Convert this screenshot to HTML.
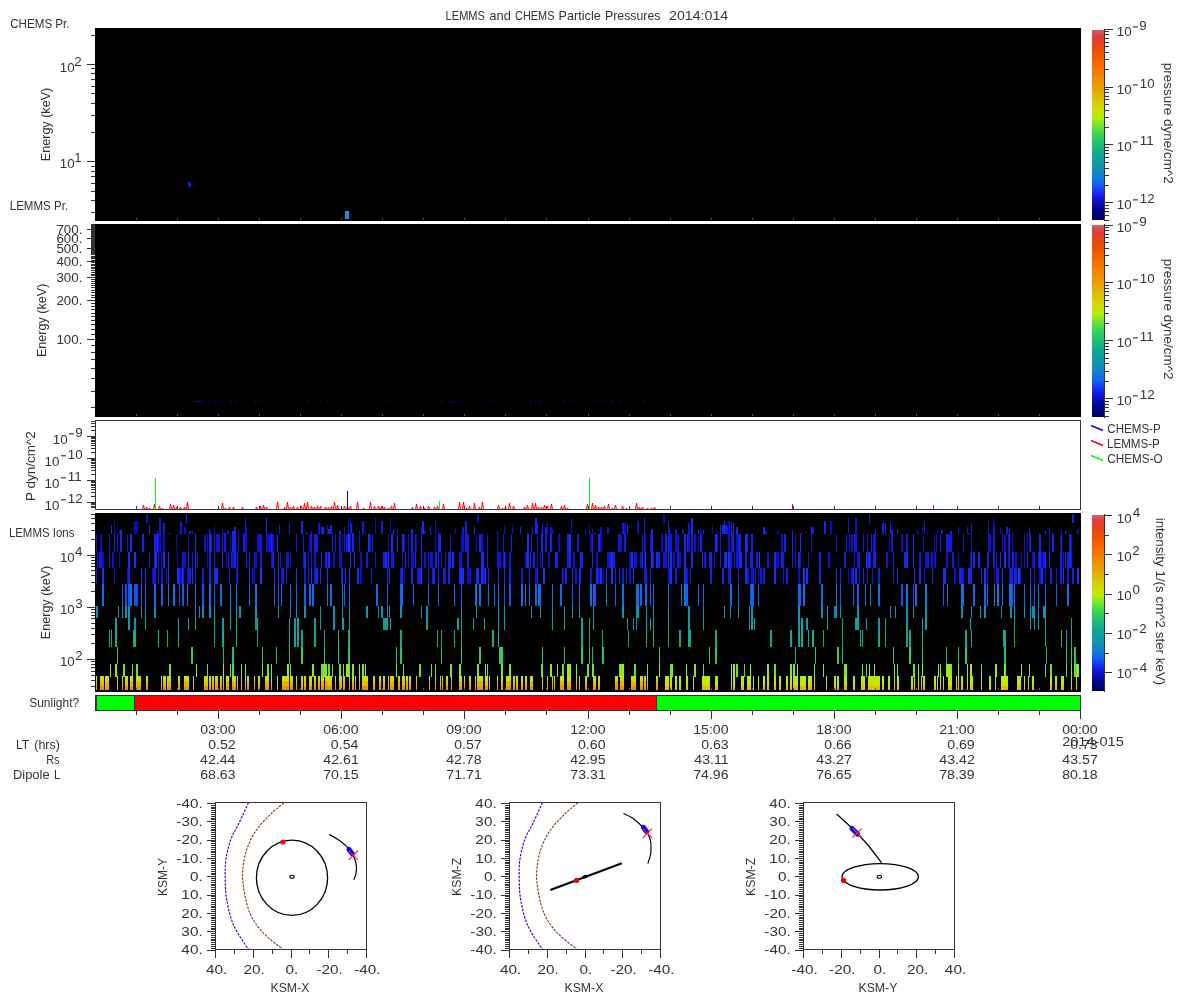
<!DOCTYPE html><html><head><meta charset="utf-8"><style>html,body{margin:0;padding:0;background:#fff;overflow:hidden}svg{display:block;will-change:transform}text{font-family:"Liberation Sans",sans-serif}</style></head><body>
<svg width="1200" height="1000" viewBox="0 0 1200 1000">
<rect x="0" y="0" width="1200" height="1000" fill="#fff"/>
<text x="445.62" y="19.75" font-size="12.7" textLength="39.30" lengthAdjust="spacingAndGlyphs" fill="#333" style="white-space:pre">LEMMS</text>
<text x="489.23" y="19.75" font-size="12.7" textLength="21.66" lengthAdjust="spacingAndGlyphs" fill="#333" style="white-space:pre">and</text>
<text x="515.05" y="19.75" font-size="12.7" textLength="39.40" lengthAdjust="spacingAndGlyphs" fill="#333" style="white-space:pre">CHEMS</text>
<text x="558.59" y="19.75" font-size="12.7" textLength="42.18" lengthAdjust="spacingAndGlyphs" fill="#333" style="white-space:pre">Particle</text>
<text x="605.02" y="19.75" font-size="12.7" textLength="55.37" lengthAdjust="spacingAndGlyphs" fill="#333" style="white-space:pre">Pressures</text>
<text x="669.04" y="19.75" font-size="12.7" textLength="59.15" lengthAdjust="spacingAndGlyphs" fill="#333" style="white-space:pre">2014:014</text>
<rect x="95" y="28" width="986" height="193" fill="#000"/>
<text x="10.22" y="27.8" font-size="12.7" textLength="59.35" lengthAdjust="spacingAndGlyphs" fill="#333" style="white-space:pre">CHEMS Pr.</text>
<rect x="91" y="35" width="4" height="1" fill="#333"/>
<rect x="87" y="64" width="8" height="1" fill="#333"/>
<rect x="91" y="68" width="4" height="1" fill="#333"/>
<rect x="91" y="73" width="4" height="1" fill="#333"/>
<rect x="91" y="79" width="4" height="1" fill="#333"/>
<rect x="91" y="86" width="4" height="1" fill="#333"/>
<rect x="91" y="93" width="4" height="1" fill="#333"/>
<rect x="91" y="103" width="4" height="1" fill="#333"/>
<rect x="91" y="115" width="4" height="1" fill="#333"/>
<rect x="91" y="132" width="4" height="1" fill="#333"/>
<rect x="87" y="161" width="8" height="1" fill="#333"/>
<rect x="91" y="166" width="4" height="1" fill="#333"/>
<rect x="91" y="171" width="4" height="1" fill="#333"/>
<rect x="91" y="176" width="4" height="1" fill="#333"/>
<rect x="91" y="183" width="4" height="1" fill="#333"/>
<rect x="91" y="191" width="4" height="1" fill="#333"/>
<rect x="91" y="200" width="4" height="1" fill="#333"/>
<rect x="91" y="212" width="4" height="1" fill="#333"/>
<text x="59.83" y="71.8" font-size="12.7" textLength="14.83" lengthAdjust="spacingAndGlyphs" fill="#333" style="white-space:pre">10</text>
<text x="74.20" y="65.8" font-size="12.7" textLength="7.42" lengthAdjust="spacingAndGlyphs" fill="#333" style="white-space:pre">2</text>
<text x="59.83" y="168.3" font-size="12.7" textLength="14.83" lengthAdjust="spacingAndGlyphs" fill="#333" style="white-space:pre">10</text>
<text x="74.20" y="162.3" font-size="12.7" textLength="7.42" lengthAdjust="spacingAndGlyphs" fill="#333" style="white-space:pre">1</text>
<text transform="translate(49.9,160.20) rotate(-90)" x="-1.01" y="0" font-size="12.7" textLength="73.43" lengthAdjust="spacingAndGlyphs" fill="#333" style="white-space:pre">Energy (keV)</text>
<rect x="188" y="182" width="3" height="5" fill="#1020c0"/>
<rect x="345" y="211" width="4" height="8" fill="#1890e8"/>
<rect x="136" y="218" width="1" height="2" fill="#555"/>
<rect x="177" y="218" width="1" height="2" fill="#555"/>
<rect x="218" y="218" width="1" height="2" fill="#555"/>
<rect x="259" y="218" width="1" height="2" fill="#555"/>
<rect x="300" y="218" width="1" height="2" fill="#555"/>
<rect x="341" y="218" width="1" height="2" fill="#555"/>
<rect x="382" y="218" width="1" height="2" fill="#555"/>
<rect x="423" y="218" width="1" height="2" fill="#555"/>
<rect x="464" y="218" width="1" height="2" fill="#555"/>
<rect x="505" y="218" width="1" height="2" fill="#555"/>
<rect x="546" y="218" width="1" height="2" fill="#555"/>
<rect x="588" y="218" width="1" height="2" fill="#555"/>
<rect x="629" y="218" width="1" height="2" fill="#555"/>
<rect x="670" y="218" width="1" height="2" fill="#555"/>
<rect x="711" y="218" width="1" height="2" fill="#555"/>
<rect x="752" y="218" width="1" height="2" fill="#555"/>
<rect x="793" y="218" width="1" height="2" fill="#555"/>
<rect x="834" y="218" width="1" height="2" fill="#555"/>
<rect x="875" y="218" width="1" height="2" fill="#555"/>
<rect x="916" y="218" width="1" height="2" fill="#555"/>
<rect x="957" y="218" width="1" height="2" fill="#555"/>
<rect x="998" y="218" width="1" height="2" fill="#555"/>
<rect x="1039" y="218" width="1" height="2" fill="#555"/>
<defs><linearGradient id="cb30" x1="0" y1="0" x2="0" y2="1"><stop offset="0.000" stop-color="#d0606a"/><stop offset="0.040" stop-color="#e03a3a"/><stop offset="0.114" stop-color="#f05000"/><stop offset="0.200" stop-color="#f87000"/><stop offset="0.256" stop-color="#f08c00"/><stop offset="0.324" stop-color="#e8a800"/><stop offset="0.370" stop-color="#d8c800"/><stop offset="0.426" stop-color="#d0e000"/><stop offset="0.466" stop-color="#b0f000"/><stop offset="0.483" stop-color="#90e820"/><stop offset="0.540" stop-color="#40d850"/><stop offset="0.597" stop-color="#20c070"/><stop offset="0.653" stop-color="#10a890"/><stop offset="0.710" stop-color="#1098a8"/><stop offset="0.767" stop-color="#1080d0"/><stop offset="0.807" stop-color="#1068f0"/><stop offset="0.852" stop-color="#1830f8"/><stop offset="0.892" stop-color="#1010d0"/><stop offset="0.938" stop-color="#000890"/><stop offset="1.000" stop-color="#000060"/></linearGradient></defs>
<rect x="1092" y="30" width="12" height="190" fill="url(#cb30)"/>
<rect x="1104" y="29" width="1" height="192" fill="#333"/>
<rect x="1104" y="29" width="9" height="1" fill="#333"/>
<rect x="1104" y="87" width="9" height="1" fill="#333"/>
<rect x="1104" y="69" width="5" height="1" fill="#333"/>
<rect x="1104" y="59" width="5" height="1" fill="#333"/>
<rect x="1104" y="52" width="5" height="1" fill="#333"/>
<rect x="1104" y="46" width="5" height="1" fill="#333"/>
<rect x="1104" y="42" width="5" height="1" fill="#333"/>
<rect x="1104" y="38" width="5" height="1" fill="#333"/>
<rect x="1104" y="34" width="5" height="1" fill="#333"/>
<rect x="1104" y="31" width="5" height="1" fill="#333"/>
<rect x="1104" y="144" width="9" height="1" fill="#333"/>
<rect x="1104" y="127" width="5" height="1" fill="#333"/>
<rect x="1104" y="117" width="5" height="1" fill="#333"/>
<rect x="1104" y="110" width="5" height="1" fill="#333"/>
<rect x="1104" y="104" width="5" height="1" fill="#333"/>
<rect x="1104" y="99" width="5" height="1" fill="#333"/>
<rect x="1104" y="96" width="5" height="1" fill="#333"/>
<rect x="1104" y="92" width="5" height="1" fill="#333"/>
<rect x="1104" y="89" width="5" height="1" fill="#333"/>
<rect x="1104" y="202" width="9" height="1" fill="#333"/>
<rect x="1104" y="185" width="5" height="1" fill="#333"/>
<rect x="1104" y="175" width="5" height="1" fill="#333"/>
<rect x="1104" y="168" width="5" height="1" fill="#333"/>
<rect x="1104" y="162" width="5" height="1" fill="#333"/>
<rect x="1104" y="157" width="5" height="1" fill="#333"/>
<rect x="1104" y="153" width="5" height="1" fill="#333"/>
<rect x="1104" y="150" width="5" height="1" fill="#333"/>
<rect x="1104" y="147" width="5" height="1" fill="#333"/>
<rect x="1104" y="220" width="5" height="1" fill="#333"/>
<rect x="1104" y="215" width="5" height="1" fill="#333"/>
<rect x="1104" y="211" width="5" height="1" fill="#333"/>
<rect x="1104" y="208" width="5" height="1" fill="#333"/>
<rect x="1104" y="205" width="5" height="1" fill="#333"/>
<text x="1116.83" y="36.4" font-size="12.7" textLength="14.83" lengthAdjust="spacingAndGlyphs" fill="#333" style="white-space:pre">10</text>
<rect x="1133.00" y="26.30" width="4.8" height="1.15" fill="#333"/>
<text x="1139.33" y="30.3" font-size="12.7" textLength="7.42" lengthAdjust="spacingAndGlyphs" fill="#333" style="white-space:pre">9</text>
<text x="1116.83" y="94.4" font-size="12.7" textLength="14.83" lengthAdjust="spacingAndGlyphs" fill="#333" style="white-space:pre">10</text>
<rect x="1133.00" y="84.30" width="4.8" height="1.15" fill="#333"/>
<text x="1139.83" y="88.3" font-size="12.7" textLength="14.83" lengthAdjust="spacingAndGlyphs" fill="#333" style="white-space:pre">10</text>
<text x="1116.83" y="151.4" font-size="12.7" textLength="14.83" lengthAdjust="spacingAndGlyphs" fill="#333" style="white-space:pre">10</text>
<rect x="1133.00" y="141.30" width="4.8" height="1.15" fill="#333"/>
<text x="1139.83" y="145.3" font-size="12.7" textLength="13.84" lengthAdjust="spacingAndGlyphs" fill="#333" style="white-space:pre">11</text>
<text x="1116.83" y="209.4" font-size="12.7" textLength="14.83" lengthAdjust="spacingAndGlyphs" fill="#333" style="white-space:pre">10</text>
<rect x="1133.00" y="199.30" width="4.8" height="1.15" fill="#333"/>
<text x="1139.83" y="203.3" font-size="12.7" textLength="14.83" lengthAdjust="spacingAndGlyphs" fill="#333" style="white-space:pre">12</text>
<text transform="translate(1164,63.80) rotate(90)" x="-0.94" y="0" font-size="12.7" textLength="120.86" lengthAdjust="spacingAndGlyphs" fill="#333" style="white-space:pre">pressure dyne/cm^2</text>
<rect x="95" y="224" width="986" height="193" fill="#000"/>
<text x="9.78" y="210" font-size="12.7" textLength="58.32" lengthAdjust="spacingAndGlyphs" fill="#333" style="white-space:pre">LEMMS Pr.</text>
<rect x="91" y="407" width="4" height="1" fill="#333"/>
<rect x="91" y="391" width="4" height="1" fill="#333"/>
<rect x="91" y="378" width="4" height="1" fill="#333"/>
<rect x="91" y="368" width="4" height="1" fill="#333"/>
<rect x="91" y="359" width="4" height="1" fill="#333"/>
<rect x="91" y="352" width="4" height="1" fill="#333"/>
<rect x="91" y="345" width="4" height="1" fill="#333"/>
<rect x="87" y="339" width="8" height="1" fill="#333"/>
<rect x="91" y="334" width="4" height="1" fill="#333"/>
<rect x="91" y="329" width="4" height="1" fill="#333"/>
<rect x="91" y="324" width="4" height="1" fill="#333"/>
<rect x="91" y="320" width="4" height="1" fill="#333"/>
<rect x="91" y="316" width="4" height="1" fill="#333"/>
<rect x="91" y="313" width="4" height="1" fill="#333"/>
<rect x="91" y="309" width="4" height="1" fill="#333"/>
<rect x="91" y="306" width="4" height="1" fill="#333"/>
<rect x="91" y="303" width="4" height="1" fill="#333"/>
<rect x="87" y="300" width="8" height="1" fill="#333"/>
<rect x="91" y="297" width="4" height="1" fill="#333"/>
<rect x="91" y="295" width="4" height="1" fill="#333"/>
<rect x="91" y="292" width="4" height="1" fill="#333"/>
<rect x="91" y="290" width="4" height="1" fill="#333"/>
<rect x="91" y="287" width="4" height="1" fill="#333"/>
<rect x="91" y="285" width="4" height="1" fill="#333"/>
<rect x="91" y="283" width="4" height="1" fill="#333"/>
<rect x="91" y="281" width="4" height="1" fill="#333"/>
<rect x="91" y="279" width="4" height="1" fill="#333"/>
<rect x="87" y="277" width="8" height="1" fill="#333"/>
<rect x="91" y="275" width="4" height="1" fill="#333"/>
<rect x="91" y="274" width="4" height="1" fill="#333"/>
<rect x="91" y="272" width="4" height="1" fill="#333"/>
<rect x="91" y="270" width="4" height="1" fill="#333"/>
<rect x="91" y="268" width="4" height="1" fill="#333"/>
<rect x="91" y="267" width="4" height="1" fill="#333"/>
<rect x="91" y="265" width="4" height="1" fill="#333"/>
<rect x="91" y="264" width="4" height="1" fill="#333"/>
<rect x="91" y="262" width="4" height="1" fill="#333"/>
<rect x="87" y="261" width="8" height="1" fill="#333"/>
<rect x="91" y="260" width="4" height="1" fill="#333"/>
<rect x="91" y="258" width="4" height="1" fill="#333"/>
<rect x="91" y="257" width="4" height="1" fill="#333"/>
<rect x="91" y="256" width="4" height="1" fill="#333"/>
<rect x="91" y="254" width="4" height="1" fill="#333"/>
<rect x="91" y="253" width="4" height="1" fill="#333"/>
<rect x="91" y="252" width="4" height="1" fill="#333"/>
<rect x="91" y="251" width="4" height="1" fill="#333"/>
<rect x="91" y="250" width="4" height="1" fill="#333"/>
<rect x="87" y="248" width="8" height="1" fill="#333"/>
<rect x="91" y="247" width="4" height="1" fill="#333"/>
<rect x="91" y="246" width="4" height="1" fill="#333"/>
<rect x="91" y="245" width="4" height="1" fill="#333"/>
<rect x="91" y="244" width="4" height="1" fill="#333"/>
<rect x="91" y="243" width="4" height="1" fill="#333"/>
<rect x="91" y="242" width="4" height="1" fill="#333"/>
<rect x="91" y="241" width="4" height="1" fill="#333"/>
<rect x="91" y="240" width="4" height="1" fill="#333"/>
<rect x="91" y="239" width="4" height="1" fill="#333"/>
<rect x="87" y="238" width="8" height="1" fill="#333"/>
<rect x="91" y="237" width="4" height="1" fill="#333"/>
<rect x="91" y="236" width="4" height="1" fill="#333"/>
<rect x="91" y="235" width="4" height="1" fill="#333"/>
<rect x="91" y="235" width="4" height="1" fill="#333"/>
<rect x="91" y="234" width="4" height="1" fill="#333"/>
<rect x="91" y="233" width="4" height="1" fill="#333"/>
<rect x="91" y="232" width="4" height="1" fill="#333"/>
<rect x="91" y="231" width="4" height="1" fill="#333"/>
<rect x="91" y="230" width="4" height="1" fill="#333"/>
<rect x="87" y="229" width="8" height="1" fill="#333"/>
<rect x="91" y="229" width="4" height="1" fill="#333"/>
<rect x="91" y="228" width="4" height="1" fill="#333"/>
<rect x="91" y="227" width="4" height="1" fill="#333"/>
<rect x="91" y="226" width="4" height="1" fill="#333"/>
<rect x="91" y="226" width="4" height="1" fill="#333"/>
<rect x="91" y="225" width="4" height="1" fill="#333"/>
<rect x="91" y="224" width="4" height="1" fill="#333"/>
<rect x="91" y="225" width="4" height="26" fill="#333"/>
<text x="56.43" y="233.5" font-size="12.7" textLength="25.95" lengthAdjust="spacingAndGlyphs" fill="#333" style="white-space:pre">700.</text>
<text x="56.43" y="242.5" font-size="12.7" textLength="25.95" lengthAdjust="spacingAndGlyphs" fill="#333" style="white-space:pre">600.</text>
<text x="56.43" y="252.5" font-size="12.7" textLength="25.95" lengthAdjust="spacingAndGlyphs" fill="#333" style="white-space:pre">500.</text>
<text x="56.43" y="265.5" font-size="12.7" textLength="25.95" lengthAdjust="spacingAndGlyphs" fill="#333" style="white-space:pre">400.</text>
<text x="56.43" y="281.5" font-size="12.7" textLength="25.95" lengthAdjust="spacingAndGlyphs" fill="#333" style="white-space:pre">300.</text>
<text x="56.43" y="304.5" font-size="12.7" textLength="25.95" lengthAdjust="spacingAndGlyphs" fill="#333" style="white-space:pre">200.</text>
<text x="56.43" y="343.5" font-size="12.7" textLength="25.95" lengthAdjust="spacingAndGlyphs" fill="#333" style="white-space:pre">100.</text>
<text transform="translate(46.2,356.10) rotate(-90)" x="-1.01" y="0" font-size="12.7" textLength="73.43" lengthAdjust="spacingAndGlyphs" fill="#333" style="white-space:pre">Energy (keV)</text>
<rect x="136" y="414" width="1" height="2" fill="#555"/>
<rect x="177" y="414" width="1" height="2" fill="#555"/>
<rect x="218" y="414" width="1" height="2" fill="#555"/>
<rect x="259" y="414" width="1" height="2" fill="#555"/>
<rect x="300" y="414" width="1" height="2" fill="#555"/>
<rect x="341" y="414" width="1" height="2" fill="#555"/>
<rect x="382" y="414" width="1" height="2" fill="#555"/>
<rect x="423" y="414" width="1" height="2" fill="#555"/>
<rect x="464" y="414" width="1" height="2" fill="#555"/>
<rect x="505" y="414" width="1" height="2" fill="#555"/>
<rect x="546" y="414" width="1" height="2" fill="#555"/>
<rect x="588" y="414" width="1" height="2" fill="#555"/>
<rect x="629" y="414" width="1" height="2" fill="#555"/>
<rect x="670" y="414" width="1" height="2" fill="#555"/>
<rect x="711" y="414" width="1" height="2" fill="#555"/>
<rect x="752" y="414" width="1" height="2" fill="#555"/>
<rect x="793" y="414" width="1" height="2" fill="#555"/>
<rect x="834" y="414" width="1" height="2" fill="#555"/>
<rect x="875" y="414" width="1" height="2" fill="#555"/>
<rect x="916" y="414" width="1" height="2" fill="#555"/>
<rect x="957" y="414" width="1" height="2" fill="#555"/>
<rect x="998" y="414" width="1" height="2" fill="#555"/>
<rect x="1039" y="414" width="1" height="2" fill="#555"/>
<rect x="466" y="401" width="1" height="1" fill="#0010a0"/>
<rect x="539" y="401" width="2" height="1" fill="#0010a0"/>
<rect x="184" y="401" width="1" height="1" fill="#0010a0"/>
<rect x="231" y="401" width="1" height="1" fill="#0010a0"/>
<rect x="194" y="401" width="2" height="1" fill="#0010a0"/>
<rect x="354" y="401" width="1" height="1" fill="#0010a0"/>
<rect x="223" y="401" width="1" height="1" fill="#0010a0"/>
<rect x="563" y="401" width="1" height="1" fill="#0010a0"/>
<rect x="381" y="401" width="1" height="1" fill="#0010a0"/>
<rect x="569" y="401" width="1" height="1" fill="#0010a0"/>
<rect x="261" y="401" width="1" height="1" fill="#0010a0"/>
<rect x="198" y="401" width="2" height="1" fill="#0010a0"/>
<rect x="541" y="401" width="1" height="1" fill="#0010a0"/>
<rect x="361" y="401" width="1" height="1" fill="#0010a0"/>
<rect x="271" y="401" width="1" height="1" fill="#0010a0"/>
<rect x="564" y="401" width="1" height="1" fill="#0010a0"/>
<rect x="255" y="401" width="2" height="1" fill="#0010a0"/>
<rect x="450" y="401" width="2" height="1" fill="#0010a0"/>
<rect x="320" y="401" width="1" height="1" fill="#0010a0"/>
<rect x="327" y="401" width="1" height="1" fill="#0010a0"/>
<rect x="234" y="401" width="2" height="1" fill="#0010a0"/>
<rect x="199" y="401" width="2" height="1" fill="#0010a0"/>
<rect x="196" y="401" width="2" height="1" fill="#0010a0"/>
<rect x="345" y="401" width="1" height="1" fill="#0010a0"/>
<rect x="572" y="401" width="1" height="1" fill="#0010a0"/>
<rect x="611" y="401" width="2" height="1" fill="#0010a0"/>
<rect x="599" y="401" width="1" height="1" fill="#0010a0"/>
<rect x="441" y="401" width="1" height="1" fill="#0010a0"/>
<rect x="319" y="401" width="2" height="1" fill="#0010a0"/>
<rect x="384" y="401" width="1" height="1" fill="#0010a0"/>
<rect x="442" y="401" width="2" height="1" fill="#0010a0"/>
<rect x="641" y="401" width="1" height="1" fill="#0010a0"/>
<rect x="594" y="401" width="1" height="1" fill="#0010a0"/>
<rect x="209" y="401" width="1" height="1" fill="#0010a0"/>
<rect x="563" y="401" width="1" height="1" fill="#0010a0"/>
<rect x="485" y="401" width="1" height="1" fill="#0010a0"/>
<rect x="635" y="401" width="1" height="1" fill="#0010a0"/>
<rect x="175" y="401" width="2" height="1" fill="#0010a0"/>
<rect x="214" y="401" width="2" height="1" fill="#0010a0"/>
<rect x="456" y="401" width="1" height="1" fill="#0010a0"/>
<rect x="493" y="401" width="2" height="1" fill="#0010a0"/>
<rect x="643" y="401" width="2" height="1" fill="#0010a0"/>
<rect x="602" y="401" width="1" height="1" fill="#0010a0"/>
<rect x="230" y="401" width="1" height="1" fill="#0010a0"/>
<rect x="620" y="401" width="2" height="1" fill="#0010a0"/>
<rect x="201" y="401" width="1" height="1" fill="#0010a0"/>
<rect x="452" y="401" width="2" height="1" fill="#0010a0"/>
<rect x="591" y="401" width="1" height="1" fill="#0010a0"/>
<rect x="530" y="401" width="2" height="1" fill="#0010a0"/>
<rect x="490" y="401" width="1" height="1" fill="#0010a0"/>
<rect x="607" y="401" width="1" height="1" fill="#0010a0"/>
<rect x="307" y="401" width="2" height="1" fill="#0010a0"/>
<rect x="254" y="401" width="1" height="1" fill="#0010a0"/>
<rect x="195" y="401" width="1" height="1" fill="#0010a0"/>
<rect x="429" y="401" width="1" height="1" fill="#0010a0"/>
<rect x="388" y="401" width="1" height="1" fill="#0010a0"/>
<rect x="535" y="401" width="1" height="1" fill="#0010a0"/>
<rect x="217" y="401" width="1" height="1" fill="#0010a0"/>
<rect x="594" y="401" width="1" height="1" fill="#0010a0"/>
<rect x="419" y="401" width="1" height="1" fill="#0010a0"/>
<defs><linearGradient id="cb225" x1="0" y1="0" x2="0" y2="1"><stop offset="0.000" stop-color="#d0606a"/><stop offset="0.040" stop-color="#e03a3a"/><stop offset="0.114" stop-color="#f05000"/><stop offset="0.200" stop-color="#f87000"/><stop offset="0.256" stop-color="#f08c00"/><stop offset="0.324" stop-color="#e8a800"/><stop offset="0.370" stop-color="#d8c800"/><stop offset="0.426" stop-color="#d0e000"/><stop offset="0.466" stop-color="#b0f000"/><stop offset="0.483" stop-color="#90e820"/><stop offset="0.540" stop-color="#40d850"/><stop offset="0.597" stop-color="#20c070"/><stop offset="0.653" stop-color="#10a890"/><stop offset="0.710" stop-color="#1098a8"/><stop offset="0.767" stop-color="#1080d0"/><stop offset="0.807" stop-color="#1068f0"/><stop offset="0.852" stop-color="#1830f8"/><stop offset="0.892" stop-color="#1010d0"/><stop offset="0.938" stop-color="#000890"/><stop offset="1.000" stop-color="#000060"/></linearGradient></defs>
<rect x="1092" y="225" width="12" height="192" fill="url(#cb225)"/>
<rect x="1104" y="224" width="1" height="194" fill="#333"/>
<rect x="1104" y="225" width="9" height="1" fill="#333"/>
<rect x="1104" y="282" width="9" height="1" fill="#333"/>
<rect x="1104" y="265" width="5" height="1" fill="#333"/>
<rect x="1104" y="255" width="5" height="1" fill="#333"/>
<rect x="1104" y="248" width="5" height="1" fill="#333"/>
<rect x="1104" y="242" width="5" height="1" fill="#333"/>
<rect x="1104" y="237" width="5" height="1" fill="#333"/>
<rect x="1104" y="234" width="5" height="1" fill="#333"/>
<rect x="1104" y="230" width="5" height="1" fill="#333"/>
<rect x="1104" y="227" width="5" height="1" fill="#333"/>
<rect x="1104" y="340" width="9" height="1" fill="#333"/>
<rect x="1104" y="323" width="5" height="1" fill="#333"/>
<rect x="1104" y="313" width="5" height="1" fill="#333"/>
<rect x="1104" y="306" width="5" height="1" fill="#333"/>
<rect x="1104" y="300" width="5" height="1" fill="#333"/>
<rect x="1104" y="295" width="5" height="1" fill="#333"/>
<rect x="1104" y="291" width="5" height="1" fill="#333"/>
<rect x="1104" y="288" width="5" height="1" fill="#333"/>
<rect x="1104" y="285" width="5" height="1" fill="#333"/>
<rect x="1104" y="398" width="9" height="1" fill="#333"/>
<rect x="1104" y="381" width="5" height="1" fill="#333"/>
<rect x="1104" y="371" width="5" height="1" fill="#333"/>
<rect x="1104" y="363" width="5" height="1" fill="#333"/>
<rect x="1104" y="358" width="5" height="1" fill="#333"/>
<rect x="1104" y="353" width="5" height="1" fill="#333"/>
<rect x="1104" y="349" width="5" height="1" fill="#333"/>
<rect x="1104" y="346" width="5" height="1" fill="#333"/>
<rect x="1104" y="343" width="5" height="1" fill="#333"/>
<rect x="1104" y="416" width="5" height="1" fill="#333"/>
<rect x="1104" y="411" width="5" height="1" fill="#333"/>
<rect x="1104" y="407" width="5" height="1" fill="#333"/>
<rect x="1104" y="404" width="5" height="1" fill="#333"/>
<rect x="1104" y="401" width="5" height="1" fill="#333"/>
<text x="1116.83" y="232.4" font-size="12.7" textLength="14.83" lengthAdjust="spacingAndGlyphs" fill="#333" style="white-space:pre">10</text>
<rect x="1133.00" y="222.30" width="4.8" height="1.15" fill="#333"/>
<text x="1139.33" y="226.3" font-size="12.7" textLength="7.42" lengthAdjust="spacingAndGlyphs" fill="#333" style="white-space:pre">9</text>
<text x="1116.83" y="289.4" font-size="12.7" textLength="14.83" lengthAdjust="spacingAndGlyphs" fill="#333" style="white-space:pre">10</text>
<rect x="1133.00" y="279.30" width="4.8" height="1.15" fill="#333"/>
<text x="1139.83" y="283.3" font-size="12.7" textLength="14.83" lengthAdjust="spacingAndGlyphs" fill="#333" style="white-space:pre">10</text>
<text x="1116.83" y="347.4" font-size="12.7" textLength="14.83" lengthAdjust="spacingAndGlyphs" fill="#333" style="white-space:pre">10</text>
<rect x="1133.00" y="337.30" width="4.8" height="1.15" fill="#333"/>
<text x="1139.83" y="341.3" font-size="12.7" textLength="13.84" lengthAdjust="spacingAndGlyphs" fill="#333" style="white-space:pre">11</text>
<text x="1116.83" y="405.4" font-size="12.7" textLength="14.83" lengthAdjust="spacingAndGlyphs" fill="#333" style="white-space:pre">10</text>
<rect x="1133.00" y="395.30" width="4.8" height="1.15" fill="#333"/>
<text x="1139.83" y="399.3" font-size="12.7" textLength="14.83" lengthAdjust="spacingAndGlyphs" fill="#333" style="white-space:pre">12</text>
<text transform="translate(1164,259.60) rotate(90)" x="-0.94" y="0" font-size="12.7" textLength="120.86" lengthAdjust="spacingAndGlyphs" fill="#333" style="white-space:pre">pressure dyne/cm^2</text>
<rect x="95.5" y="420.5" width="985" height="89" fill="#fff" stroke="#333" stroke-width="1"/>
<rect x="87" y="436" width="8" height="1" fill="#333"/>
<rect x="91" y="430" width="4" height="1" fill="#333"/>
<rect x="91" y="426" width="4" height="1" fill="#333"/>
<rect x="91" y="423" width="4" height="1" fill="#333"/>
<rect x="91" y="421" width="4" height="1" fill="#333"/>
<rect x="87" y="458" width="8" height="1" fill="#333"/>
<rect x="91" y="452" width="4" height="1" fill="#333"/>
<rect x="91" y="448" width="4" height="1" fill="#333"/>
<rect x="91" y="445" width="4" height="1" fill="#333"/>
<rect x="91" y="443" width="4" height="1" fill="#333"/>
<rect x="91" y="441" width="4" height="1" fill="#333"/>
<rect x="91" y="440" width="4" height="1" fill="#333"/>
<rect x="91" y="438" width="4" height="1" fill="#333"/>
<rect x="91" y="437" width="4" height="1" fill="#333"/>
<rect x="87" y="480" width="8" height="1" fill="#333"/>
<rect x="91" y="474" width="4" height="1" fill="#333"/>
<rect x="91" y="470" width="4" height="1" fill="#333"/>
<rect x="91" y="467" width="4" height="1" fill="#333"/>
<rect x="91" y="465" width="4" height="1" fill="#333"/>
<rect x="91" y="463" width="4" height="1" fill="#333"/>
<rect x="91" y="462" width="4" height="1" fill="#333"/>
<rect x="91" y="460" width="4" height="1" fill="#333"/>
<rect x="91" y="459" width="4" height="1" fill="#333"/>
<rect x="87" y="502" width="8" height="1" fill="#333"/>
<rect x="91" y="496" width="4" height="1" fill="#333"/>
<rect x="91" y="492" width="4" height="1" fill="#333"/>
<rect x="91" y="489" width="4" height="1" fill="#333"/>
<rect x="91" y="487" width="4" height="1" fill="#333"/>
<rect x="91" y="485" width="4" height="1" fill="#333"/>
<rect x="91" y="484" width="4" height="1" fill="#333"/>
<rect x="91" y="482" width="4" height="1" fill="#333"/>
<rect x="91" y="481" width="4" height="1" fill="#333"/>
<rect x="91" y="507" width="4" height="1" fill="#333"/>
<rect x="91" y="506" width="4" height="1" fill="#333"/>
<rect x="91" y="504" width="4" height="1" fill="#333"/>
<rect x="91" y="503" width="4" height="1" fill="#333"/>
<rect x="91" y="436" width="4" height="3" fill="#333"/>
<rect x="91" y="458" width="4" height="3" fill="#333"/>
<rect x="91" y="480" width="4" height="3" fill="#333"/>
<rect x="91" y="502" width="4" height="3" fill="#333"/>
<rect x="136" y="506" width="1" height="3" fill="#333"/>
<rect x="177" y="506" width="1" height="3" fill="#333"/>
<rect x="218" y="506" width="1" height="3" fill="#333"/>
<rect x="259" y="506" width="1" height="3" fill="#333"/>
<rect x="300" y="506" width="1" height="3" fill="#333"/>
<rect x="341" y="506" width="1" height="3" fill="#333"/>
<rect x="382" y="506" width="1" height="3" fill="#333"/>
<rect x="423" y="506" width="1" height="3" fill="#333"/>
<rect x="464" y="506" width="1" height="3" fill="#333"/>
<rect x="505" y="506" width="1" height="3" fill="#333"/>
<rect x="546" y="506" width="1" height="3" fill="#333"/>
<rect x="588" y="506" width="1" height="3" fill="#333"/>
<rect x="629" y="506" width="1" height="3" fill="#333"/>
<rect x="670" y="506" width="1" height="3" fill="#333"/>
<rect x="711" y="506" width="1" height="3" fill="#333"/>
<rect x="752" y="506" width="1" height="3" fill="#333"/>
<rect x="793" y="506" width="1" height="3" fill="#333"/>
<rect x="834" y="506" width="1" height="3" fill="#333"/>
<rect x="875" y="506" width="1" height="3" fill="#333"/>
<rect x="916" y="506" width="1" height="3" fill="#333"/>
<rect x="957" y="506" width="1" height="3" fill="#333"/>
<rect x="998" y="506" width="1" height="3" fill="#333"/>
<rect x="1039" y="506" width="1" height="3" fill="#333"/>
<rect x="69.00" y="433.20" width="4.8" height="1.15" fill="#333"/>
<text x="75.33" y="437.2" font-size="12.7" textLength="7.42" lengthAdjust="spacingAndGlyphs" fill="#333" style="white-space:pre">9</text>
<text x="52.73" y="443.7" font-size="12.7" textLength="14.83" lengthAdjust="spacingAndGlyphs" fill="#333" style="white-space:pre">10</text>
<rect x="61.00" y="455.20" width="4.8" height="1.15" fill="#333"/>
<text x="67.83" y="459.2" font-size="12.7" textLength="14.83" lengthAdjust="spacingAndGlyphs" fill="#333" style="white-space:pre">10</text>
<text x="44.53" y="465.7" font-size="12.7" textLength="14.83" lengthAdjust="spacingAndGlyphs" fill="#333" style="white-space:pre">10</text>
<rect x="61.00" y="477.20" width="4.8" height="1.15" fill="#333"/>
<text x="67.83" y="481.2" font-size="12.7" textLength="13.84" lengthAdjust="spacingAndGlyphs" fill="#333" style="white-space:pre">11</text>
<text x="44.53" y="487.7" font-size="12.7" textLength="14.83" lengthAdjust="spacingAndGlyphs" fill="#333" style="white-space:pre">10</text>
<rect x="61.00" y="499.20" width="4.8" height="1.15" fill="#333"/>
<text x="67.83" y="503.2" font-size="12.7" textLength="14.83" lengthAdjust="spacingAndGlyphs" fill="#333" style="white-space:pre">12</text>
<text x="44.53" y="509.7" font-size="12.7" textLength="14.83" lengthAdjust="spacingAndGlyphs" fill="#333" style="white-space:pre">10</text>
<text transform="translate(34.8,500.00) rotate(-90)" x="-1.08" y="0" font-size="12.7" textLength="69.89" lengthAdjust="spacingAndGlyphs" fill="#333" style="white-space:pre">P dyn/cm^2</text>
<path d="M142.5 509.5L143.5 505L144.5 509.5 M145.5 509.5L146.5 507L147.5 509.5 M148.5 509.5L149.5 508L150.5 509.5 M153.5 509.5L154.5 504L155.5 509.5 M158.5 509.5L159.5 506L160.5 509.5 M161.5 509.5L162.5 508L163.5 509.5 M169.5 509.5L170.5 504L171.5 509.5 M172.5 509.5L173.5 505L174.5 509.5 M175.5 509.5L176.5 507L177.5 509.5 M179.5 509.5L180.5 507L181.5 509.5 M183.5 509.5L184.5 507L185.5 509.5 M186.5 509.5L187.5 502L188.5 509.5 M221.5 509.5L222.5 503L223.5 509.5 M224.5 509.5L225.5 508L226.5 509.5 M228.5 509.5L229.5 507L230.5 509.5 M232.5 509.5L233.5 507L234.5 509.5 M241.5 509.5L242.5 507L243.5 509.5 M255.5 509.5L256.5 507L257.5 509.5 M259.5 509.5L260.5 506L261.5 509.5 M262.5 509.5L263.5 505L264.5 509.5 M265.5 509.5L266.5 507L267.5 509.5 M276.5 509.5L277.5 502L278.5 509.5 M283.5 509.5L284.5 507L285.5 509.5 M286.5 509.5L287.5 502L288.5 509.5 M289.5 509.5L290.5 507L291.5 509.5 M292.5 509.5L293.5 506L294.5 509.5 M296.5 509.5L297.5 507L298.5 509.5 M300.5 509.5L301.5 506L302.5 509.5 M303.5 509.5L304.5 503L305.5 509.5 M306.5 509.5L307.5 502L308.5 509.5 M310.5 509.5L311.5 506L312.5 509.5 M313.5 509.5L314.5 507L315.5 509.5 M316.5 509.5L317.5 506L318.5 509.5 M319.5 509.5L320.5 506L321.5 509.5 M324.5 509.5L325.5 507L326.5 509.5 M327.5 509.5L328.5 507L329.5 509.5 M330.5 509.5L331.5 506L332.5 509.5 M333.5 509.5L334.5 502L335.5 509.5 M336.5 509.5L337.5 505L338.5 509.5 M343.5 509.5L344.5 506L345.5 509.5 M346.5 509.5L347.5 506L348.5 509.5 M349.5 509.5L350.5 506L351.5 509.5 M356.5 509.5L357.5 502L358.5 509.5 M362.5 509.5L363.5 508L364.5 509.5 M369.5 509.5L370.5 502L371.5 509.5 M373.5 509.5L374.5 506L375.5 509.5 M377.5 509.5L378.5 506L379.5 509.5 M380.5 509.5L381.5 506L382.5 509.5 M383.5 509.5L384.5 507L385.5 509.5 M387.5 509.5L388.5 508L389.5 509.5 M390.5 509.5L391.5 506L392.5 509.5 M393.5 509.5L394.5 503L395.5 509.5 M411.5 509.5L412.5 507L413.5 509.5 M415.5 509.5L416.5 504L417.5 509.5 M419.5 509.5L420.5 506L421.5 509.5 M423.5 509.5L424.5 508L425.5 509.5 M427.5 509.5L428.5 506L429.5 509.5 M433.5 509.5L434.5 507L435.5 509.5 M436.5 509.5L437.5 506L438.5 509.5 M442.5 509.5L443.5 504L444.5 509.5 M458.5 509.5L459.5 502L460.5 509.5 M462.5 509.5L463.5 502L464.5 509.5 M465.5 509.5L466.5 508L467.5 509.5 M468.5 509.5L469.5 506L470.5 509.5 M473.5 509.5L474.5 503L475.5 509.5 M478.5 509.5L479.5 507L480.5 509.5 M481.5 509.5L482.5 502L483.5 509.5 M497.5 509.5L498.5 505L499.5 509.5 M501.5 509.5L502.5 508L503.5 509.5 M504.5 509.5L505.5 507L506.5 509.5 M508.5 509.5L509.5 503L510.5 509.5 M512.5 509.5L513.5 506L514.5 509.5 M523.5 509.5L524.5 507L525.5 509.5 M526.5 509.5L527.5 505L528.5 509.5 M531.5 509.5L532.5 503L533.5 509.5 M534.5 509.5L535.5 503L536.5 509.5 M537.5 509.5L538.5 507L539.5 509.5 M540.5 509.5L541.5 507L542.5 509.5 M543.5 509.5L544.5 505L545.5 509.5 M546.5 509.5L547.5 506L548.5 509.5 M550.5 509.5L551.5 504L552.5 509.5 M560.5 509.5L561.5 506L562.5 509.5 M563.5 509.5L564.5 505L565.5 509.5 M566.5 509.5L567.5 508L568.5 509.5 M586.5 509.5L587.5 504L588.5 509.5 M591.5 509.5L592.5 503L593.5 509.5 M594.5 509.5L595.5 505L596.5 509.5 M597.5 509.5L598.5 507L599.5 509.5 M600.5 509.5L601.5 507L602.5 509.5 M603.5 509.5L604.5 506L605.5 509.5 M607.5 509.5L608.5 504L609.5 509.5 M611.5 509.5L612.5 508L613.5 509.5 M614.5 509.5L615.5 505L616.5 509.5 M621.5 509.5L622.5 506L623.5 509.5 M625.5 509.5L626.5 508L627.5 509.5 M635.5 509.5L636.5 503L637.5 509.5 M638.5 509.5L639.5 507L640.5 509.5 M641.5 509.5L642.5 507L643.5 509.5 M646.5 509.5L647.5 508L648.5 509.5 M650.5 509.5L651.5 508L652.5 509.5 M653.5 509.5L654.5 507L655.5 509.5" stroke="#ff0000" stroke-width="1" fill="none"/>
<rect x="792" y="504" width="1" height="5" fill="#ff0000"/>
<rect x="933" y="505" width="1" height="4" fill="#ff0000"/>
<rect x="155" y="478" width="1" height="31" fill="#00ff00"/>
<rect x="589" y="478" width="1" height="31" fill="#00ff00"/>
<rect x="439" y="501" width="1" height="8" fill="#00ff00"/>
<rect x="347" y="491" width="1" height="18" fill="#0000ff"/>
<line x1="1091" y1="425.5" x2="1103" y2="430.5" stroke="#0000ff" stroke-width="1.5"/>
<text x="1107.32" y="432.9" font-size="12.7" textLength="53.37" lengthAdjust="spacingAndGlyphs" fill="#333" style="white-space:pre">CHEMS-P</text>
<line x1="1091" y1="440.5" x2="1103" y2="445.5" stroke="#ff0000" stroke-width="1.5"/>
<text x="1106.97" y="447.9" font-size="12.7" textLength="52.88" lengthAdjust="spacingAndGlyphs" fill="#333" style="white-space:pre">LEMMS-P</text>
<line x1="1091" y1="455.5" x2="1103" y2="460.5" stroke="#00ff00" stroke-width="1.5"/>
<text x="1107.31" y="462.6" font-size="12.7" textLength="55.40" lengthAdjust="spacingAndGlyphs" fill="#333" style="white-space:pre">CHEMS-O</text>
<rect x="95" y="513" width="986" height="179" fill="#000"/>
<path fill="#0a0db7" d="M134 521h2v13h-2zM136 521h2v13h-2zM176 534h1v18h-1zM246 534h1v18h-1zM342 534h1v18h-1zM431 533h1v1h-1zM435 534h1v18h-1zM477 514h2v9h-2zM661 534h2v18h-2zM663 514h2v9h-2zM698 534h1v18h-1zM717 534h1v18h-1zM923 534h1v18h-1zM934 534h1v18h-1zM1002 531h1v3h-1zM1027 534h1v18h-1zM1077 529h2v5h-2z"/>
<path fill="#0b0ebe" d="M100 534h2v18h-2zM102 552h2v16h-2zM109 534h1v18h-1zM114 521h1v13h-1zM159 534h2v18h-2zM177 552h1v16h-1zM188 534h1v18h-1zM207 552h1v16h-1zM227 529h1v5h-1zM257 534h1v18h-1zM267 534h2v18h-2zM290 552h1v16h-1zM327 525h1v9h-1zM332 533h1v1h-1zM360 552h2v16h-2zM375 518h1v16h-1zM390 518h1v16h-1zM416 534h1v18h-1zM435 521h1v13h-1zM459 552h2v16h-2zM461 534h1v18h-1zM476 534h1v18h-1zM497 534h1v18h-1zM537 534h1v18h-1zM548 552h2v16h-2zM558 534h2v18h-2zM600 534h2v18h-2zM624 523h2v11h-2zM636 552h1v16h-1zM645 534h1v18h-1zM712 525h1v9h-1zM728 521h2v13h-2zM738 552h1v16h-1zM776 552h1v16h-1zM777 531h2v3h-2zM777 552h2v16h-2zM805 531h1v3h-1zM830 521h2v13h-2zM875 534h1v18h-1zM901 534h2v18h-2zM927 531h1v3h-1zM971 534h1v18h-1zM1024 533h1v1h-1zM1041 552h2v16h-2z"/>
<path fill="#0d0fc5" d="M114 568h1v16h-1zM119 552h1v16h-1zM127 568h1v16h-1zM163 534h2v18h-2zM204 534h2v18h-2zM209 529h2v5h-2zM214 525h1v9h-1zM230 534h1v18h-1zM236 568h1v16h-1zM243 533h1v1h-1zM252 568h2v16h-2zM254 568h1v16h-1zM255 552h2v16h-2zM271 552h1v16h-1zM303 552h1v16h-1zM309 534h2v18h-2zM321 527h1v7h-1zM327 552h1v16h-1zM333 552h2v16h-2zM339 552h2v16h-2zM344 527h1v7h-1zM348 518h1v16h-1zM388 534h1v18h-1zM397 529h1v5h-1zM402 552h1v16h-1zM404 534h1v18h-1zM408 534h1v18h-1zM413 533h1v1h-1zM438 531h1v3h-1zM498 552h1v16h-1zM512 525h1v9h-1zM525 552h1v16h-1zM541 529h1v5h-1zM585 530h1v4h-1zM596 552h2v16h-2zM603 568h1v16h-1zM620 534h2v18h-2zM629 552h2v16h-2zM637 521h2v13h-2zM644 552h1v16h-1zM653 552h1v16h-1zM673 552h2v16h-2zM675 529h2v5h-2zM677 534h2v18h-2zM679 552h2v16h-2zM700 530h2v4h-2zM714 552h1v16h-1zM728 534h2v18h-2zM730 552h1v16h-1zM751 568h2v16h-2zM795 534h1v18h-1zM848 568h1v16h-1zM889 534h1v18h-1zM934 552h1v16h-1zM1004 534h2v18h-2zM1009 568h1v16h-1zM1021 552h1v16h-1zM1024 534h1v18h-1zM1029 534h1v18h-1zM1032 552h2v16h-2zM1061 530h1v4h-1z"/>
<path fill="#0f0fcc" d="M96 534h1v18h-1zM146 514h2v9h-2zM152 568h2v16h-2zM161 568h1v16h-1zM166 568h1v16h-1zM180 568h2v16h-2zM184 552h2v16h-2zM188 568h1v16h-1zM207 534h1v18h-1zM216 534h2v18h-2zM226 552h1v16h-1zM232 552h2v16h-2zM272 534h2v18h-2zM287 552h2v16h-2zM335 534h1v18h-1zM341 552h1v16h-1zM359 534h1v18h-1zM360 568h2v16h-2zM370 534h1v18h-1zM387 552h1v16h-1zM410 533h1v1h-1zM411 552h2v16h-2zM431 552h1v16h-1zM441 552h1v16h-1zM455 529h1v5h-1zM462 534h2v18h-2zM467 568h2v16h-2zM481 534h2v18h-2zM487 534h1v18h-1zM504 525h1v9h-1zM527 533h2v1h-2zM535 568h2v16h-2zM542 523h1v11h-1zM571 518h1v16h-1zM590 534h2v18h-2zM592 529h1v5h-1zM600 527h2v7h-2zM607 527h2v7h-2zM640 552h2v16h-2zM644 568h1v16h-1zM663 552h2v16h-2zM688 534h2v18h-2zM690 568h1v16h-1zM717 531h1v3h-1zM736 534h2v18h-2zM747 568h1v16h-1zM755 568h1v16h-1zM758 568h1v16h-1zM781 534h2v18h-2zM783 568h1v16h-1zM795 552h1v16h-1zM798 568h2v16h-2zM811 534h1v18h-1zM848 518h1v16h-1zM854 552h1v16h-1zM855 518h2v16h-2zM855 534h2v18h-2zM857 552h2v16h-2zM867 534h1v18h-1zM887 552h1v16h-1zM893 568h1v16h-1zM922 527h1v7h-1zM925 552h2v16h-2zM936 534h1v18h-1zM937 529h1v5h-1zM946 552h1v16h-1zM958 552h1v16h-1zM970 552h1v16h-1zM988 521h1v13h-1zM989 534h2v18h-2zM993 518h1v16h-1zM994 525h1v9h-1zM994 568h1v16h-1zM996 552h1v16h-1zM996 568h1v16h-1zM1000 527h1v7h-1zM1002 534h1v18h-1zM1008 552h1v16h-1zM1015 552h2v16h-2zM1038 552h1v16h-1zM1049 527h1v7h-1zM1049 534h1v18h-1zM1060 534h1v18h-1zM1071 534h1v18h-1z"/>
<path fill="#1012d2" d="M109 552h1v16h-1zM112 552h2v16h-2zM117 534h1v18h-1zM127 534h1v18h-1zM159 518h2v16h-2zM183 552h1v16h-1zM184 527h2v7h-2zM218 534h2v18h-2zM222 529h1v5h-1zM238 530h1v4h-1zM245 518h1v16h-1zM245 534h1v18h-1zM254 552h1v16h-1zM258 534h2v18h-2zM266 534h1v18h-1zM296 534h1v18h-1zM314 552h2v16h-2zM332 534h1v18h-1zM339 534h2v18h-2zM350 518h1v16h-1zM359 531h1v3h-1zM404 568h1v16h-1zM408 552h1v16h-1zM413 552h1v16h-1zM424 531h2v3h-2zM424 552h2v16h-2zM430 552h1v16h-1zM432 552h1v16h-1zM450 534h1v18h-1zM469 568h2v16h-2zM499 552h2v16h-2zM503 552h1v16h-1zM537 523h1v11h-1zM537 552h1v16h-1zM540 552h1v16h-1zM547 523h1v11h-1zM550 527h2v7h-2zM552 529h1v5h-1zM573 552h2v16h-2zM575 568h1v16h-1zM589 525h1v9h-1zM598 568h2v16h-2zM607 552h2v16h-2zM629 568h2v16h-2zM668 568h1v16h-1zM675 534h2v18h-2zM682 530h2v4h-2zM694 534h2v18h-2zM704 552h1v16h-1zM731 534h1v18h-1zM736 552h2v16h-2zM747 533h1v1h-1zM767 552h2v16h-2zM800 552h1v16h-1zM828 552h2v16h-2zM849 534h1v18h-1zM851 534h2v18h-2zM851 568h2v16h-2zM872 568h1v16h-1zM891 529h2v5h-2zM917 530h1v4h-1zM924 568h1v16h-1zM931 552h1v16h-1zM932 552h1v16h-1zM954 568h2v16h-2zM963 568h1v16h-1zM994 552h1v16h-1zM1012 534h1v18h-1zM1039 568h2v16h-2zM1056 568h1v16h-1zM1067 568h2v16h-2z"/>
<path fill="#1116d7" d="M96 568h1v16h-1zM117 533h1v1h-1zM119 531h1v3h-1zM158 534h1v18h-1zM161 552h1v16h-1zM162 568h1v16h-1zM180 521h2v13h-2zM192 531h1v3h-1zM197 552h1v16h-1zM211 534h1v18h-1zM238 534h1v18h-1zM243 534h1v18h-1zM260 534h2v18h-2zM260 552h2v16h-2zM269 534h2v18h-2zM279 525h1v9h-1zM281 568h1v16h-1zM304 568h2v16h-2zM311 531h1v3h-1zM318 523h2v11h-2zM344 534h1v18h-1zM350 534h1v18h-1zM375 552h1v16h-1zM428 552h1v16h-1zM445 552h1v16h-1zM445 568h1v16h-1zM462 527h2v7h-2zM483 568h1v16h-1zM487 552h1v16h-1zM497 531h1v3h-1zM497 552h1v16h-1zM503 534h1v18h-1zM505 552h1v16h-1zM509 552h2v16h-2zM521 568h2v16h-2zM562 568h2v16h-2zM576 568h1v16h-1zM590 568h2v16h-2zM619 534h1v18h-1zM634 552h2v16h-2zM650 534h1v18h-1zM665 552h2v16h-2zM669 527h1v7h-1zM669 568h1v16h-1zM670 534h2v18h-2zM687 568h1v16h-1zM688 523h2v11h-2zM691 534h2v18h-2zM720 534h1v18h-1zM732 534h1v18h-1zM734 552h1v16h-1zM760 568h2v16h-2zM765 531h1v3h-1zM808 552h1v16h-1zM812 527h2v7h-2zM836 534h1v18h-1zM863 534h1v18h-1zM870 552h1v16h-1zM873 534h1v18h-1zM893 552h1v16h-1zM919 552h2v16h-2zM924 521h1v13h-1zM927 552h1v16h-1zM935 552h1v16h-1zM947 552h1v16h-1zM950 534h2v18h-2zM958 527h1v7h-1zM963 534h1v18h-1zM971 523h1v11h-1zM987 552h1v16h-1zM988 534h1v18h-1zM993 534h1v18h-1zM1008 534h1v18h-1zM1013 552h1v16h-1zM1020 568h1v16h-1zM1024 552h1v16h-1zM1029 527h1v7h-1zM1034 568h1v16h-1zM1045 568h1v16h-1zM1052 533h2v1h-2zM1060 568h1v16h-1z"/>
<path fill="#121adc" d="M99 552h1v16h-1zM100 552h2v16h-2zM154 568h2v16h-2zM156 534h1v18h-1zM158 552h1v16h-1zM179 568h1v16h-1zM183 568h1v16h-1zM187 568h1v16h-1zM192 552h1v16h-1zM195 533h1v1h-1zM195 568h1v16h-1zM202 568h2v16h-2zM229 568h1v16h-1zM231 552h1v16h-1zM280 552h1v16h-1zM282 568h2v16h-2zM286 552h1v16h-1zM303 534h1v18h-1zM308 552h1v16h-1zM311 534h1v18h-1zM311 552h1v16h-1zM316 534h2v18h-2zM341 568h1v16h-1zM362 521h2v13h-2zM365 531h1v3h-1zM366 552h2v16h-2zM383 552h2v16h-2zM391 552h2v16h-2zM393 552h1v16h-1zM417 568h2v16h-2zM421 527h1v7h-1zM432 568h1v16h-1zM435 552h1v16h-1zM443 568h2v16h-2zM467 534h2v18h-2zM488 568h1v16h-1zM529 568h1v16h-1zM545 527h2v7h-2zM557 552h1v16h-1zM567 552h2v16h-2zM577 534h2v18h-2zM609 552h2v16h-2zM613 552h2v16h-2zM615 568h1v16h-1zM622 523h2v11h-2zM622 568h2v16h-2zM626 568h1v16h-1zM642 534h1v18h-1zM645 568h1v16h-1zM658 552h1v16h-1zM668 521h1v13h-1zM669 534h1v18h-1zM675 568h2v16h-2zM727 527h1v7h-1zM728 568h2v16h-2zM731 521h1v13h-1zM738 534h1v18h-1zM748 568h1v16h-1zM750 552h1v16h-1zM753 568h1v16h-1zM756 552h2v16h-2zM766 531h1v3h-1zM871 534h1v18h-1zM873 552h1v16h-1zM886 552h1v16h-1zM891 534h2v18h-2zM906 534h2v18h-2zM940 534h1v18h-1zM948 534h2v18h-2zM952 552h2v16h-2zM961 568h2v16h-2zM967 527h1v7h-1zM987 533h1v1h-1zM994 534h1v18h-1zM1012 533h1v1h-1zM1015 568h2v16h-2zM1063 552h1v16h-1zM1071 552h1v16h-1z"/>
<path fill="#131ee1" d="M149 552h1v16h-1zM158 568h1v16h-1zM163 523h2v11h-2zM182 552h1v16h-1zM209 552h2v16h-2zM214 534h1v18h-1zM214 552h1v16h-1zM222 534h1v18h-1zM223 533h1v1h-1zM224 534h2v18h-2zM228 531h1v3h-1zM244 534h1v18h-1zM246 527h1v7h-1zM246 552h1v16h-1zM249 552h1v16h-1zM271 533h1v1h-1zM271 534h1v18h-1zM272 552h2v16h-2zM289 523h1v11h-1zM314 534h2v18h-2zM314 568h2v16h-2zM330 525h2v9h-2zM346 534h2v18h-2zM381 521h2v13h-2zM397 534h1v18h-1zM400 568h2v16h-2zM438 534h1v18h-1zM438 552h1v16h-1zM448 552h2v16h-2zM461 552h1v16h-1zM465 521h2v13h-2zM465 534h2v18h-2zM467 552h2v16h-2zM476 568h1v16h-1zM532 527h1v7h-1zM545 534h2v18h-2zM592 534h1v18h-1zM594 533h2v1h-2zM619 568h1v16h-1zM624 534h2v18h-2zM650 568h1v16h-1zM677 552h2v16h-2zM686 568h1v16h-1zM709 552h1v16h-1zM720 525h1v9h-1zM724 552h1v16h-1zM725 525h2v9h-2zM738 568h1v16h-1zM739 534h2v18h-2zM745 552h2v16h-2zM763 568h2v16h-2zM783 552h1v16h-1zM786 568h2v16h-2zM844 552h2v16h-2zM846 534h1v18h-1zM859 568h1v16h-1zM867 552h1v16h-1zM869 514h1v9h-1zM874 534h1v18h-1zM874 552h1v16h-1zM878 568h2v16h-2zM914 568h1v16h-1zM918 533h1v1h-1zM928 552h1v16h-1zM941 530h2v4h-2zM946 534h1v18h-1zM947 534h1v18h-1zM968 533h2v1h-2zM987 568h1v16h-1zM1006 527h2v7h-2zM1043 552h2v16h-2zM1050 568h2v16h-2zM1060 552h1v16h-1zM1067 552h2v16h-2zM1069 534h2v18h-2zM1072 514h2v9h-2zM1072 568h2v16h-2z"/>
<path fill="#1422e6" d="M97 552h1v16h-1zM111 525h1v9h-1zM128 568h2v16h-2zM179 533h1v1h-1zM186 514h1v9h-1zM189 568h2v16h-2zM209 568h2v16h-2zM214 568h1v16h-1zM224 533h2v1h-2zM228 552h1v16h-1zM234 527h2v7h-2zM234 534h2v18h-2zM286 568h1v16h-1zM308 568h1v16h-1zM325 552h2v16h-2zM339 531h2v3h-2zM351 523h1v11h-1zM371 568h1v16h-1zM372 534h1v18h-1zM411 534h2v18h-2zM415 534h1v18h-1zM419 568h2v16h-2zM421 534h1v18h-1zM428 568h1v16h-1zM436 552h1v16h-1zM438 568h1v16h-1zM479 534h2v18h-2zM484 568h1v16h-1zM509 568h2v16h-2zM520 527h1v7h-1zM526 552h1v16h-1zM530 552h1v16h-1zM531 534h1v18h-1zM533 552h2v16h-2zM550 534h2v18h-2zM567 534h2v18h-2zM581 552h2v16h-2zM618 534h1v18h-1zM644 518h1v16h-1zM644 534h1v18h-1zM646 568h1v16h-1zM651 529h2v5h-2zM700 534h2v18h-2zM720 552h1v16h-1zM722 568h2v16h-2zM751 534h2v18h-2zM751 552h2v16h-2zM781 552h2v16h-2zM784 534h2v18h-2zM792 552h1v16h-1zM801 533h2v1h-2zM819 552h2v16h-2zM863 568h1v16h-1zM867 568h1v16h-1zM885 523h1v11h-1zM950 531h2v3h-2zM970 568h1v16h-1zM971 568h1v16h-1zM988 552h1v16h-1zM993 552h1v16h-1zM997 568h2v16h-2zM1009 529h1v5h-1zM1010 568h2v16h-2zM1012 568h1v16h-1zM1034 552h1v16h-1zM1052 534h2v18h-2zM1061 568h1v16h-1zM1065 530h1v4h-1z"/>
<path fill="#1526eb" d="M120 534h2v18h-2zM142 534h2v18h-2zM145 568h1v16h-1zM149 525h1v9h-1zM154 534h2v18h-2zM169 533h2v1h-2zM222 552h1v16h-1zM232 534h2v18h-2zM234 552h2v16h-2zM237 568h1v16h-1zM304 552h2v16h-2zM316 568h2v16h-2zM321 552h1v16h-1zM328 529h2v5h-2zM352 534h2v18h-2zM387 568h1v16h-1zM388 552h1v16h-1zM389 568h1v16h-1zM402 534h1v18h-1zM411 529h2v5h-2zM411 568h2v16h-2zM421 552h1v16h-1zM430 527h1v7h-1zM433 568h2v16h-2zM439 534h1v18h-1zM448 568h2v16h-2zM459 568h2v16h-2zM504 552h1v16h-1zM511 534h1v18h-1zM535 518h2v16h-2zM541 534h1v18h-1zM555 552h2v16h-2zM565 568h2v16h-2zM569 552h2v16h-2zM580 568h1v16h-1zM592 552h1v16h-1zM598 534h2v18h-2zM642 552h1v16h-1zM651 534h2v18h-2zM665 534h2v18h-2zM668 534h1v18h-1zM684 534h2v18h-2zM691 552h2v16h-2zM702 552h1v16h-1zM703 530h1v4h-1zM705 552h1v16h-1zM710 552h2v16h-2zM710 568h2v16h-2zM731 552h1v16h-1zM733 534h1v18h-1zM736 527h2v7h-2zM739 552h2v16h-2zM741 552h1v16h-1zM747 534h1v18h-1zM763 527h2v7h-2zM792 530h1v4h-1zM798 552h2v16h-2zM819 568h2v16h-2zM824 521h2v13h-2zM840 568h1v16h-1zM859 552h1v16h-1zM869 552h1v16h-1zM875 530h1v4h-1zM882 523h2v11h-2zM890 523h1v11h-1zM897 529h1v5h-1zM904 552h2v16h-2zM932 568h1v16h-1zM959 568h2v16h-2zM973 552h2v16h-2zM978 552h2v16h-2zM1009 552h1v16h-1zM1030 534h1v18h-1zM1030 568h1v16h-1zM1039 534h2v18h-2zM1061 534h1v18h-1zM1061 552h1v16h-1zM1065 552h1v16h-1zM1069 552h2v16h-2z"/>
<path fill="#162af0" d="M114 534h1v18h-1zM130 534h2v18h-2zM154 552h2v16h-2zM157 531h1v3h-1zM157 534h1v18h-1zM163 552h2v16h-2zM177 568h1v16h-1zM188 552h1v16h-1zM189 531h2v3h-2zM195 534h1v18h-1zM215 568h1v16h-1zM237 552h1v16h-1zM266 518h1v16h-1zM274 568h1v16h-1zM278 552h1v16h-1zM301 521h2v13h-2zM306 533h2v1h-2zM311 568h1v16h-1zM320 568h1v16h-1zM322 527h2v7h-2zM328 552h2v16h-2zM350 552h1v16h-1zM352 533h2v1h-2zM368 534h2v18h-2zM385 552h2v16h-2zM391 534h2v18h-2zM393 529h1v5h-1zM415 552h1v16h-1zM422 521h2v13h-2zM440 534h1v18h-1zM450 552h1v16h-1zM481 552h2v16h-2zM504 568h1v16h-1zM542 534h1v18h-1zM542 552h1v16h-1zM572 568h1v16h-1zM606 568h1v16h-1zM611 552h2v16h-2zM627 525h1v9h-1zM659 552h1v16h-1zM670 552h2v16h-2zM684 568h2v16h-2zM687 534h1v18h-1zM691 518h2v16h-2zM722 525h2v9h-2zM724 521h1v13h-1zM725 552h2v16h-2zM730 568h1v16h-1zM732 533h1v1h-1zM774 552h2v16h-2zM792 534h1v18h-1zM811 527h1v7h-1zM836 568h1v16h-1zM853 568h1v16h-1zM854 534h1v18h-1zM866 552h1v16h-1zM886 533h1v1h-1zM913 534h1v18h-1zM919 568h2v16h-2zM943 568h1v16h-1zM968 568h2v16h-2zM971 552h1v16h-1zM1009 534h1v18h-1zM1027 552h1v16h-1zM1045 531h1v3h-1zM1045 552h1v16h-1zM1049 552h1v16h-1z"/>
<path fill="#172ef5" d="M120 530h2v4h-2zM128 552h2v16h-2zM156 552h1v16h-1zM182 568h1v16h-1zM195 552h1v16h-1zM209 534h2v18h-2zM216 568h2v16h-2zM232 531h2v3h-2zM249 568h1v16h-1zM277 534h1v18h-1zM345 568h1v16h-1zM348 534h1v18h-1zM349 534h1v18h-1zM357 568h2v16h-2zM402 568h1v16h-1zM403 534h1v18h-1zM405 552h1v16h-1zM452 552h2v16h-2zM461 568h1v16h-1zM462 568h2v16h-2zM474 527h1v7h-1zM477 568h2v16h-2zM483 552h1v16h-1zM498 568h1v16h-1zM527 534h2v18h-2zM527 552h2v16h-2zM537 568h1v16h-1zM569 534h2v18h-2zM579 568h1v16h-1zM580 552h1v16h-1zM596 568h2v16h-2zM600 568h2v16h-2zM611 568h2v16h-2zM631 552h2v16h-2zM645 552h1v16h-1zM656 552h2v16h-2zM670 568h2v16h-2zM684 552h2v16h-2zM698 530h1v4h-1zM715 534h2v18h-2zM728 552h2v16h-2zM733 523h1v11h-1zM745 534h2v18h-2zM800 534h1v18h-1zM855 568h2v16h-2zM868 552h1v16h-1zM875 552h1v16h-1zM906 552h2v16h-2zM913 552h1v16h-1zM944 568h2v16h-2zM981 568h1v16h-1zM1000 552h1v16h-1zM1012 552h1v16h-1zM1014 568h1v16h-1zM1039 552h2v16h-2zM1041 568h2v16h-2z"/>
<path fill="#1832f8" d="M102 568h2v16h-2zM134 552h2v16h-2zM141 568h1v16h-1zM168 552h1v16h-1zM168 568h1v16h-1zM278 568h1v16h-1zM296 568h1v16h-1zM327 568h1v16h-1zM354 552h1v16h-1zM481 568h2v16h-2zM485 568h1v16h-1zM543 568h2v16h-2zM651 552h2v16h-2zM668 552h1v16h-1zM745 568h2v16h-2zM759 552h1v16h-1zM774 568h2v16h-2zM803 568h2v16h-2zM806 568h2v16h-2zM897 568h1v16h-1zM984 568h2v16h-2zM1002 568h1v16h-1zM1004 552h2v16h-2zM1018 568h2v16h-2zM1063 568h1v16h-1zM1077 568h2v16h-2z"/>
<path fill="#1739f7" d="M178 568h1v16h-1zM192 568h1v16h-1zM260 568h2v16h-2zM342 568h1v16h-1zM349 568h1v16h-1zM421 568h1v16h-1zM633 568h1v16h-1z"/>
<path fill="#144bf4" d="M125 584h2v22h-2zM572 584h1v22h-1zM750 584h1v22h-1zM913 584h1v22h-1zM1012 584h1v22h-1z"/>
<path fill="#1352f3" d="M134 584h2v22h-2zM136 584h2v22h-2zM179 584h1v22h-1zM182 584h1v22h-1zM202 584h2v22h-2zM214 584h1v22h-1zM278 584h1v22h-1zM504 584h1v22h-1zM509 584h2v22h-2zM579 584h1v22h-1zM753 584h1v22h-1zM901 584h2v22h-2z"/>
<path fill="#1258f2" d="M122 584h1v22h-1zM128 584h2v22h-2zM141 584h1v22h-1zM145 584h1v22h-1zM162 584h1v22h-1zM183 584h1v22h-1zM344 584h1v22h-1zM387 584h1v22h-1zM594 584h2v22h-2zM686 584h1v22h-1zM840 584h1v22h-1zM857 584h2v22h-2zM943 584h1v22h-1zM1034 584h1v22h-1z"/>
<path fill="#115ef1" d="M304 584h2v22h-2zM461 584h1v22h-1zM535 584h2v22h-2zM540 584h1v22h-1zM593 584h1v22h-1zM650 584h1v22h-1zM730 584h1v22h-1zM738 584h1v22h-1zM758 584h1v22h-1zM853 584h1v22h-1z"/>
<path fill="#1164f1" d="M154 584h2v22h-2zM161 584h1v22h-1zM209 584h2v22h-2zM309 584h2v22h-2zM349 584h1v22h-1zM400 584h2v22h-2zM428 584h1v22h-1zM454 584h1v22h-1zM640 584h2v22h-2zM645 584h1v22h-1zM687 584h1v22h-1zM800 584h1v22h-1zM973 584h2v22h-2zM984 584h2v22h-2zM1024 584h1v22h-1zM1030 584h1v22h-1zM1056 584h1v22h-1z"/>
<path fill="#1069ee" d="M290 584h1v22h-1zM296 584h1v22h-1zM330 584h2v22h-2zM402 584h1v22h-1zM413 584h1v22h-1zM438 584h1v22h-1zM615 584h1v22h-1zM637 584h2v22h-2zM703 584h1v22h-1zM798 584h2v22h-2zM821 584h2v22h-2zM870 584h1v22h-1zM1045 584h1v22h-1z"/>
<path fill="#106cea" d="M249 584h1v22h-1zM274 584h1v22h-1zM281 584h1v22h-1zM312 584h2v22h-2zM376 584h2v22h-2zM475 584h1v22h-1zM479 584h2v22h-2zM494 584h1v22h-1zM521 584h2v22h-2zM560 584h2v22h-2zM646 584h1v22h-1zM653 584h1v22h-1zM803 584h2v22h-2zM836 584h1v22h-1zM1009 584h1v22h-1z"/>
<path fill="#106fe6" d="M102 584h2v22h-2zM220 584h2v22h-2zM230 584h1v22h-1zM327 584h1v22h-1zM342 584h1v22h-1zM498 584h1v22h-1zM538 584h2v22h-2zM668 584h1v22h-1zM698 584h1v22h-1zM751 584h2v22h-2zM1002 584h1v22h-1zM1014 584h1v22h-1z"/>
<path fill="#1072e2" d="M130 584h2v22h-2zM168 584h1v22h-1zM173 584h2v22h-2zM187 584h1v22h-1zM236 584h1v22h-1zM488 584h1v22h-1zM525 584h1v22h-1zM529 584h1v22h-1zM590 584h2v22h-2zM622 584h2v22h-2zM636 584h1v22h-1zM681 584h1v22h-1zM865 584h1v22h-1zM878 584h2v22h-2zM915 584h2v22h-2zM947 584h1v22h-1zM961 584h2v22h-2zM963 584h1v22h-1zM1010 584h2v22h-2zM1038 584h1v22h-1zM1067 584h2v22h-2z"/>
<path fill="#1075de" d="M195 584h1v22h-1zM255 584h2v22h-2zM552 584h1v22h-1zM684 584h2v22h-2zM731 584h1v22h-1zM906 584h2v22h-2zM987 584h1v22h-1z"/>
<path fill="#1078da" d="M476 584h1v22h-1zM606 584h1v22h-1zM925 584h2v22h-2zM994 584h1v22h-1zM997 584h2v22h-2z"/>
<path fill="#1087c4" d="M145 606h1v12h-1zM154 606h2v12h-2zM195 606h1v12h-1z"/>
<path fill="#1089c1" d="M202 606h2v12h-2zM209 606h2v12h-2zM290 606h1v12h-1zM378 606h1v12h-1zM387 606h1v12h-1zM421 606h1v12h-1zM730 606h1v12h-1zM821 606h2v12h-2zM834 606h2v12h-2zM836 606h1v12h-1zM895 606h1v12h-1zM1034 606h1v12h-1z"/>
<path fill="#108bbd" d="M199 606h1v12h-1zM214 606h1v12h-1zM296 606h1v12h-1zM426 606h2v12h-2zM564 606h1v12h-1zM646 606h1v12h-1zM688 606h2v12h-2zM890 606h1v12h-1zM1001 606h1v12h-1zM1024 606h1v12h-1zM1030 606h1v12h-1zM1032 606h2v12h-2zM1038 606h1v12h-1z"/>
<path fill="#108dba" d="M97 606h1v12h-1zM320 606h1v12h-1zM333 606h2v12h-2zM593 606h1v12h-1zM703 606h1v12h-1zM749 606h1v12h-1zM751 606h2v12h-2zM906 606h2v12h-2zM1045 606h1v12h-1z"/>
<path fill="#1090b6" d="M96 606h1v12h-1zM236 606h1v12h-1zM239 606h2v12h-2zM381 606h2v12h-2zM400 606h2v12h-2zM504 606h1v12h-1zM552 606h1v12h-1zM840 606h1v12h-1zM961 606h2v12h-2zM980 606h1v12h-1zM1010 606h2v12h-2zM1043 606h2v12h-2z"/>
<path fill="#1092b3" d="M125 606h2v12h-2zM230 606h1v12h-1zM349 606h1v12h-1zM389 606h1v12h-1zM531 606h1v12h-1zM579 606h1v12h-1zM637 606h2v12h-2zM653 606h1v12h-1zM668 606h1v12h-1zM857 606h2v12h-2zM913 606h1v12h-1zM925 606h2v12h-2zM984 606h2v12h-2z"/>
<path fill="#1094af" d="M128 606h2v12h-2zM255 606h2v12h-2zM278 606h1v12h-1zM342 606h1v12h-1zM540 606h1v12h-1zM724 606h1v12h-1zM827 606h1v12h-1zM971 606h1v12h-1z"/>
<path fill="#1096ac" d="M122 606h1v12h-1zM134 618h2v12h-2zM141 606h1v12h-1zM255 618h2v12h-2zM333 618h2v12h-2zM461 606h1v12h-1zM476 606h1v12h-1zM572 606h1v12h-1zM627 618h1v12h-1zM636 606h1v12h-1zM636 618h1v12h-1zM738 606h1v12h-1zM798 606h2v12h-2zM878 618h2v12h-2zM885 618h1v12h-1z"/>
<path fill="#1098a8" d="M118 606h1v12h-1zM178 618h1v12h-1zM304 606h2v12h-2zM366 606h2v12h-2zM484 618h1v12h-1zM498 606h1v12h-1zM581 618h2v12h-2zM593 618h1v12h-1zM622 606h2v12h-2zM1014 606h1v12h-1z"/>
<path fill="#1099a6" d="M342 618h1v12h-1zM349 618h1v12h-1zM383 618h2v12h-2zM387 618h1v12h-1zM703 618h1v12h-1zM866 618h1v12h-1zM1038 618h1v12h-1zM1045 618h1v12h-1zM1071 618h1v12h-1z"/>
<path fill="#109ba4" d="M128 618h2v12h-2zM195 618h1v12h-1zM223 618h1v12h-1zM230 618h1v12h-1zM294 618h2v12h-2zM390 618h1v12h-1zM457 618h2v12h-2zM498 618h1v12h-1zM798 618h2v12h-2zM827 618h1v12h-1zM906 618h2v12h-2zM1034 618h1v12h-1z"/>
<path fill="#109ca2" d="M188 618h1v12h-1zM236 618h1v12h-1zM343 618h1v12h-1zM426 618h2v12h-2zM552 618h1v12h-1zM751 618h2v12h-2zM801 618h2v12h-2zM806 618h2v12h-2zM922 618h1v12h-1zM925 618h2v12h-2z"/>
<path fill="#109ea0" d="M145 618h1v12h-1zM214 618h1v12h-1zM222 618h1v12h-1zM461 618h1v12h-1zM473 618h1v12h-1zM650 618h1v12h-1zM653 618h1v12h-1zM842 618h1v12h-1zM857 618h2v12h-2zM970 618h1v12h-1z"/>
<path fill="#109f9d" d="M115 618h2v12h-2zM257 618h1v12h-1zM297 618h2v12h-2zM314 618h2v12h-2zM320 618h1v12h-1zM385 618h2v12h-2zM504 618h1v12h-1zM564 618h1v12h-1zM589 618h1v12h-1zM633 618h1v12h-1zM646 618h1v12h-1zM668 618h1v12h-1zM688 618h2v12h-2zM754 618h1v12h-1zM855 618h2v12h-2zM1030 618h1v12h-1z"/>
<path fill="#10a09b" d="M289 618h1v12h-1zM749 618h1v12h-1zM1014 618h1v12h-1z"/>
<path fill="#10a397" d="M109 630h1v17h-1zM133 630h1v17h-1zM167 630h1v17h-1zM441 630h1v17h-1zM679 630h2v17h-2zM798 630h2v17h-2zM1014 630h1v17h-1z"/>
<path fill="#10a595" d="M236 630h1v17h-1zM257 630h1v17h-1zM294 630h2v17h-2zM348 630h1v17h-1zM581 630h2v17h-2zM628 630h1v17h-1zM690 630h1v17h-1zM808 630h1v17h-1zM1004 630h2v17h-2zM1045 630h1v17h-1z"/>
<path fill="#10a693" d="M297 630h2v17h-2zM314 630h2v17h-2zM324 630h1v17h-1zM437 630h1v17h-1zM589 630h1v17h-1zM668 630h1v17h-1zM770 630h2v17h-2zM842 630h1v17h-1zM862 630h1v17h-1zM885 630h1v17h-1zM906 630h2v17h-2zM909 630h2v17h-2zM965 630h2v17h-2zM1071 630h1v17h-1z"/>
<path fill="#10a791" d="M214 630h1v17h-1zM289 630h1v17h-1zM301 630h2v17h-2zM602 630h1v17h-1zM823 630h1v17h-1z"/>
<path fill="#11a98e" d="M111 630h1v17h-1zM790 630h2v17h-2zM1003 630h1v17h-1z"/>
<path fill="#12ab8b" d="M115 630h2v17h-2zM222 630h1v17h-1zM400 630h2v17h-2zM454 630h1v17h-1zM688 630h2v17h-2zM715 630h2v17h-2zM860 630h1v17h-1zM878 630h2v17h-2zM1066 630h1v17h-1z"/>
<path fill="#14ae89" d="M338 630h1v17h-1zM492 630h2v17h-2zM498 630h1v17h-1zM653 630h1v17h-1zM801 630h2v17h-2zM1061 630h1v17h-1z"/>
<path fill="#15b086" d="M134 630h2v17h-2zM158 630h1v17h-1zM178 630h1v17h-1zM223 630h1v17h-1zM349 630h1v17h-1zM646 630h1v17h-1zM922 630h1v17h-1zM971 630h1v17h-1z"/>
<path fill="#17b283" d="M461 630h1v17h-1zM812 630h2v17h-2z"/>
<path fill="#1cba77" d="M795 647h1v17h-1zM946 647h1v17h-1z"/>
<path fill="#1ebd75" d="M223 647h1v17h-1zM592 647h1v17h-1zM602 647h1v17h-1zM842 647h1v17h-1z"/>
<path fill="#1fbf72" d="M232 647h2v17h-2zM289 647h1v17h-1zM958 647h1v17h-1zM1046 647h1v17h-1z"/>
<path fill="#21c16f" d="M276 647h1v17h-1zM338 647h1v17h-1zM441 647h1v17h-1zM564 647h1v17h-1zM1004 647h2v17h-2z"/>
<path fill="#24c36c" d="M396 647h1v17h-1zM400 647h2v17h-2zM709 647h1v17h-1zM1066 647h1v17h-1z"/>
<path fill="#27c569" d="M191 647h1v17h-1zM348 647h1v17h-1zM589 647h1v17h-1zM603 647h1v17h-1zM893 647h1v17h-1z"/>
<path fill="#2ac766" d="M117 647h1v17h-1zM349 647h1v17h-1zM461 647h1v17h-1zM715 647h2v17h-2zM1074 647h2v17h-2z"/>
<path fill="#2cc964" d="M262 647h1v17h-1zM499 647h2v17h-2zM837 647h2v17h-2zM965 647h2v17h-2z"/>
<path fill="#2fcb61" d="M542 647h1v17h-1zM815 647h1v17h-1zM1071 647h1v17h-1z"/>
<path fill="#32cd5e" d="M192 647h1v17h-1zM324 647h1v17h-1zM479 647h2v17h-2zM501 647h2v17h-2zM581 647h2v17h-2zM922 647h1v17h-1z"/>
<path fill="#35d05b" d="M301 647h2v17h-2zM659 647h1v17h-1zM909 647h2v17h-2z"/>
<path fill="#5cde3f" d="M232 664h2v13h-2zM703 664h1v13h-1zM744 664h1v13h-1zM866 664h1v13h-1z"/>
<path fill="#63df3b" d="M328 664h2v13h-2zM332 664h1v13h-1zM541 664h1v13h-1zM562 664h2v13h-2zM634 664h2v13h-2zM736 664h2v13h-2zM1066 664h1v13h-1zM1076 664h1v13h-1z"/>
<path fill="#6ae037" d="M123 664h2v13h-2zM207 664h1v13h-1zM230 664h1v13h-1zM322 664h2v13h-2zM419 664h2v13h-2zM587 664h1v13h-1zM588 664h1v13h-1zM619 664h1v13h-1zM670 664h2v13h-2zM774 664h2v13h-2zM862 664h1v13h-1zM897 664h1v13h-1zM913 664h1v13h-1zM914 664h1v13h-1zM981 664h1v13h-1zM1045 664h1v13h-1zM1074 664h2v13h-2z"/>
<path fill="#71e233" d="M132 664h1v13h-1zM136 664h2v13h-2zM169 664h2v13h-2zM241 664h1v13h-1zM267 664h2v13h-2zM321 664h1v13h-1zM339 664h2v13h-2zM431 664h1v13h-1zM435 664h1v13h-1zM451 664h1v13h-1zM542 664h1v13h-1zM593 664h1v13h-1zM814 664h1v13h-1zM1050 664h2v13h-2z"/>
<path fill="#78e32e" d="M290 664h1v13h-1zM343 664h1v13h-1zM348 664h1v13h-1zM477 664h2v13h-2zM487 664h1v13h-1zM557 664h1v13h-1zM592 664h1v13h-1zM647 664h1v13h-1zM793 664h2v13h-2zM1029 664h1v13h-1z"/>
<path fill="#7fe52a" d="M325 664h2v13h-2zM349 664h1v13h-1zM362 664h2v13h-2zM403 664h1v13h-1zM501 664h2v13h-2zM509 664h2v13h-2zM576 664h1v13h-1zM823 664h1v13h-1zM844 664h2v13h-2zM1071 664h1v13h-1z"/>
<path fill="#86e626" d="M110 664h1v13h-1zM245 664h1v13h-1zM262 664h1v13h-1zM271 664h1v13h-1zM396 664h1v13h-1zM450 664h1v13h-1zM620 664h2v13h-2zM686 664h1v13h-1zM767 664h2v13h-2zM790 664h2v13h-2zM797 664h1v13h-1zM894 664h1v13h-1zM950 664h2v13h-2z"/>
<path fill="#8de722" d="M115 664h2v13h-2zM287 664h2v13h-2zM312 664h2v13h-2zM352 664h2v13h-2zM672 664h1v13h-1zM694 664h2v13h-2zM734 664h1v13h-1zM874 664h1v13h-1zM918 664h1v13h-1zM940 664h1v13h-1zM946 664h1v13h-1zM958 664h1v13h-1zM967 664h1v13h-1zM995 664h1v13h-1zM996 664h1v13h-1zM1004 664h2v13h-2z"/>
<path fill="#96e91a" d="M365 664h1v13h-1zM459 664h2v13h-2zM550 664h2v13h-2zM569 664h2v13h-2zM750 664h1v13h-1zM922 664h1v13h-1zM938 664h1v13h-1zM947 664h1v13h-1zM1077 664h2v13h-2z"/>
<path fill="#9fec11" d="M196 664h1v13h-1zM324 664h1v13h-1zM346 664h2v13h-2zM485 664h1v13h-1zM567 664h2v13h-2zM622 664h2v13h-2zM659 664h1v13h-1zM733 664h1v13h-1zM846 664h1v13h-1zM869 664h1v13h-1zM970 664h1v13h-1zM1021 664h1v13h-1z"/>
<path fill="#a8ee08" d="M223 664h1v13h-1zM359 664h1v13h-1zM717 676h1v5h-1zM731 664h1v13h-1zM795 676h1v5h-1zM800 676h1v5h-1zM874 676h1v5h-1zM888 676h1v5h-1zM911 676h2v5h-2zM914 676h1v5h-1zM948 664h2v13h-2zM971 664h1v13h-1zM1001 676h1v5h-1z"/>
<path fill="#b1f000" d="M668 676h1v5h-1zM693 676h1v5h-1zM704 676h1v5h-1zM706 676h2v5h-2zM709 676h1v5h-1zM734 676h1v5h-1zM742 676h2v5h-2zM747 676h1v5h-1zM748 676h1v5h-1zM763 676h2v5h-2zM797 676h1v5h-1zM834 676h2v5h-2zM844 676h2v5h-2zM853 676h1v5h-1zM868 676h1v5h-1zM882 676h2v5h-2zM923 676h1v5h-1zM924 676h1v5h-1zM935 676h1v5h-1zM948 676h2v5h-2zM961 676h2v5h-2zM967 676h1v5h-1zM971 676h1v5h-1zM989 676h2v5h-2zM1004 676h2v5h-2zM1006 676h2v5h-2zM1020 676h1v5h-1zM1024 676h1v5h-1zM1050 676h2v5h-2z"/>
<path fill="#b5ee00" d="M665 676h2v5h-2zM667 676h1v5h-1zM670 676h2v5h-2zM703 676h1v5h-1zM705 676h1v5h-1zM708 676h1v5h-1zM715 676h2v5h-2zM749 676h1v5h-1zM750 676h1v5h-1zM758 676h1v5h-1zM805 676h1v5h-1zM837 676h2v5h-2zM846 676h1v5h-1zM854 676h1v5h-1zM862 676h1v5h-1zM863 676h1v5h-1zM876 676h2v5h-2zM894 676h1v5h-1zM934 676h1v5h-1zM940 676h1v5h-1zM943 676h1v5h-1zM970 676h1v5h-1zM1002 676h1v5h-1zM1003 676h1v5h-1zM1017 676h1v5h-1zM1028 676h1v5h-1zM1032 676h2v5h-2zM1061 676h1v5h-1zM1062 676h1v5h-1zM1076 676h1v5h-1z"/>
<path fill="#b9ec00" d="M675 676h2v5h-2zM686 676h1v5h-1zM687 676h1v5h-1zM702 676h1v5h-1zM731 676h1v5h-1zM733 676h1v5h-1zM753 676h1v5h-1zM774 676h2v5h-2zM779 676h2v5h-2zM786 676h2v5h-2zM793 676h2v5h-2zM801 676h2v5h-2zM811 676h1v5h-1zM814 676h1v5h-1zM870 676h1v5h-1zM871 676h1v5h-1zM872 676h1v5h-1zM875 676h1v5h-1zM878 676h2v5h-2zM889 676h1v5h-1zM898 676h1v5h-1zM921 676h1v5h-1zM937 676h1v5h-1zM950 676h2v5h-2zM958 676h1v5h-1zM1056 676h1v5h-1zM1063 676h1v5h-1zM1071 676h1v5h-1z"/>
<path fill="#bdea00" d="M741 676h1v5h-1zM767 676h2v5h-2zM790 676h2v5h-2zM796 676h1v5h-1zM803 676h2v5h-2zM808 676h1v5h-1zM861 676h1v5h-1zM864 676h1v5h-1zM873 676h1v5h-1zM897 676h1v5h-1zM918 676h1v5h-1zM956 676h1v5h-1zM972 676h1v5h-1zM981 676h1v5h-1zM1055 676h1v5h-1z"/>
<path fill="#c1e800" d="M679 676h2v5h-2zM809 676h2v5h-2zM826 676h1v5h-1zM869 676h1v5h-1zM995 676h1v5h-1zM1018 676h2v5h-2z"/>
<path fill="#c5e600" d="M138 676h1v5h-1zM284 676h2v5h-2zM366 676h2v5h-2zM461 676h1v5h-1zM497 676h1v5h-1zM521 676h2v5h-2zM586 676h1v5h-1zM634 676h2v5h-2zM687 681h1v5h-1zM741 681h1v5h-1zM786 681h2v5h-2zM793 681h2v5h-2zM803 681h2v5h-2zM882 681h2v5h-2zM972 681h1v5h-1z"/>
<path fill="#c9e400" d="M130 676h2v5h-2zM146 676h2v5h-2zM184 676h2v5h-2zM187 676h1v5h-1zM206 676h1v5h-1zM209 676h2v5h-2zM226 676h1v5h-1zM232 676h2v5h-2zM287 676h2v5h-2zM296 676h1v5h-1zM311 676h1v5h-1zM393 676h1v5h-1zM409 676h1v5h-1zM410 676h1v5h-1zM429 676h1v5h-1zM435 676h1v5h-1zM442 676h1v5h-1zM487 676h1v5h-1zM506 676h2v5h-2zM509 676h2v5h-2zM530 676h1v5h-1zM576 676h1v5h-1zM598 676h2v5h-2zM645 676h1v5h-1zM665 681h2v5h-2zM679 681h2v5h-2zM715 681h2v5h-2zM734 681h1v5h-1zM749 681h1v5h-1zM753 681h1v5h-1zM790 681h2v5h-2zM846 681h1v5h-1zM870 681h1v5h-1zM911 681h2v5h-2zM921 681h1v5h-1zM948 681h2v5h-2zM1002 681h1v5h-1zM1018 681h2v5h-2zM1024 681h1v5h-1z"/>
<path fill="#cde200" d="M167 676h1v5h-1zM168 676h1v5h-1zM228 676h1v5h-1zM258 676h2v5h-2zM267 676h2v5h-2zM304 676h2v5h-2zM322 676h2v5h-2zM328 676h2v5h-2zM330 676h2v5h-2zM341 676h1v5h-1zM352 676h2v5h-2zM364 676h1v5h-1zM373 676h1v5h-1zM390 676h1v5h-1zM406 676h2v5h-2zM440 676h1v5h-1zM446 676h2v5h-2zM464 676h1v5h-1zM485 676h1v5h-1zM486 676h1v5h-1zM489 676h1v5h-1zM516 676h2v5h-2zM526 676h1v5h-1zM567 676h2v5h-2zM569 676h2v5h-2zM620 676h2v5h-2zM668 681h1v5h-1zM706 681h2v5h-2zM742 681h2v5h-2zM747 681h1v5h-1zM750 681h1v5h-1zM763 681h2v5h-2zM767 681h2v5h-2zM774 681h2v5h-2zM805 681h1v5h-1zM837 681h2v5h-2zM868 681h1v5h-1zM876 681h2v5h-2zM878 681h2v5h-2zM924 681h1v5h-1zM956 681h1v5h-1zM967 681h1v5h-1zM1004 681h2v5h-2zM1063 681h1v5h-1z"/>
<path fill="#d0e000" d="M96 676h1v5h-1zM105 676h2v5h-2zM107 676h2v5h-2zM122 676h1v5h-1zM161 676h1v5h-1zM163 676h2v5h-2zM193 676h1v5h-1zM223 676h1v5h-1zM227 676h1v5h-1zM245 676h1v5h-1zM247 676h2v5h-2zM271 676h1v5h-1zM282 676h2v5h-2zM314 676h2v5h-2zM343 676h1v5h-1zM365 676h1v5h-1zM379 676h2v5h-2zM383 676h2v5h-2zM391 676h2v5h-2zM416 676h1v5h-1zM459 676h2v5h-2zM475 676h1v5h-1zM531 676h1v5h-1zM547 676h1v5h-1zM560 676h2v5h-2zM562 676h2v5h-2zM579 676h1v5h-1zM633 676h1v5h-1zM642 676h1v5h-1zM670 681h2v5h-2zM675 681h2v5h-2zM702 681h1v5h-1zM703 681h1v5h-1zM709 681h1v5h-1zM758 681h1v5h-1zM795 681h1v5h-1zM801 681h2v5h-2zM854 681h1v5h-1zM863 681h1v5h-1zM864 681h1v5h-1zM873 681h1v5h-1zM874 681h1v5h-1zM888 681h1v5h-1zM897 681h1v5h-1zM934 681h1v5h-1zM935 681h1v5h-1zM995 681h1v5h-1zM1020 681h1v5h-1zM1056 681h1v5h-1zM1062 681h1v5h-1z"/>
<path fill="#d1dd00" d="M100 676h2v5h-2zM102 676h2v5h-2zM125 676h2v5h-2zM132 676h1v5h-1zM136 676h2v5h-2zM169 676h2v5h-2zM179 676h1v5h-1zM186 676h1v5h-1zM204 676h2v5h-2zM215 676h1v5h-1zM220 676h2v5h-2zM234 676h2v5h-2zM266 676h1v5h-1zM290 676h1v5h-1zM301 676h2v5h-2zM325 676h2v5h-2zM339 676h2v5h-2zM349 676h1v5h-1zM362 676h2v5h-2zM402 676h1v5h-1zM451 676h1v5h-1zM481 676h2v5h-2zM508 676h1v5h-1zM513 676h2v5h-2zM525 676h1v5h-1zM532 676h1v5h-1zM593 676h1v5h-1zM616 676h2v5h-2zM622 676h2v5h-2zM640 676h2v5h-2zM667 681h1v5h-1zM686 681h1v5h-1zM693 681h1v5h-1zM705 681h1v5h-1zM733 681h1v5h-1zM748 681h1v5h-1zM796 681h1v5h-1zM809 681h2v5h-2zM811 681h1v5h-1zM834 681h2v5h-2zM844 681h2v5h-2zM853 681h1v5h-1zM872 681h1v5h-1zM875 681h1v5h-1zM898 681h1v5h-1zM914 681h1v5h-1zM940 681h1v5h-1zM950 681h2v5h-2zM971 681h1v5h-1zM1050 681h2v5h-2zM1071 681h1v5h-1zM1076 681h1v5h-1z"/>
<path fill="#d2db00" d="M117 676h1v5h-1zM127 676h1v5h-1zM165 676h1v5h-1zM178 676h1v5h-1zM188 676h1v5h-1zM207 676h1v5h-1zM212 676h2v5h-2zM216 676h2v5h-2zM254 676h1v5h-1zM265 676h1v5h-1zM277 676h1v5h-1zM286 676h1v5h-1zM309 676h2v5h-2zM318 676h2v5h-2zM321 676h1v5h-1zM327 676h1v5h-1zM335 676h1v5h-1zM355 676h1v5h-1zM359 676h1v5h-1zM374 676h1v5h-1zM388 676h1v5h-1zM398 676h2v5h-2zM403 676h1v5h-1zM404 676h1v5h-1zM469 676h2v5h-2zM501 676h2v5h-2zM542 676h1v5h-1zM552 676h1v5h-1zM554 676h1v5h-1zM585 676h1v5h-1zM615 676h1v5h-1zM631 676h2v5h-2zM647 676h1v5h-1zM656 676h2v5h-2zM708 681h1v5h-1zM717 681h1v5h-1zM800 681h1v5h-1zM814 681h1v5h-1zM826 681h1v5h-1zM861 681h1v5h-1zM869 681h1v5h-1zM871 681h1v5h-1zM889 681h1v5h-1zM894 681h1v5h-1zM918 681h1v5h-1zM937 681h1v5h-1zM943 681h1v5h-1zM958 681h1v5h-1zM961 681h2v5h-2zM970 681h1v5h-1zM981 681h1v5h-1zM989 681h2v5h-2zM1001 681h1v5h-1zM1003 681h1v5h-1zM1006 681h2v5h-2zM1017 681h1v5h-1zM1028 681h1v5h-1zM1032 681h2v5h-2zM1061 681h1v5h-1z"/>
<path fill="#d2d900" d="M139 676h2v5h-2zM237 676h1v5h-1zM241 676h1v5h-1zM291 676h2v5h-2zM344 676h1v5h-1zM477 676h2v5h-2zM479 676h2v5h-2zM594 676h2v5h-2zM644 676h1v5h-1zM704 681h1v5h-1zM731 681h1v5h-1zM779 681h2v5h-2zM797 681h1v5h-1zM808 681h1v5h-1zM862 681h1v5h-1zM923 681h1v5h-1zM1055 681h1v5h-1z"/>
<path fill="#d7cc00" d="M670 686h2v4h-2zM675 686h2v4h-2zM706 686h2v4h-2zM972 686h1v4h-1zM989 686h2v4h-2zM1061 686h1v4h-1z"/>
<path fill="#d7ca00" d="M679 686h2v4h-2zM758 686h1v4h-1zM889 686h1v4h-1zM956 686h1v4h-1z"/>
<path fill="#d8c800" d="M96 681h1v5h-1zM125 681h2v5h-2zM127 681h1v5h-1zM179 681h1v5h-1zM188 681h1v5h-1zM207 681h1v5h-1zM258 681h2v5h-2zM301 681h2v5h-2zM311 681h1v5h-1zM328 681h2v5h-2zM388 681h1v5h-1zM403 681h1v5h-1zM485 681h1v5h-1zM487 681h1v5h-1zM542 681h1v5h-1zM598 681h2v5h-2zM647 681h1v5h-1zM665 686h2v4h-2zM750 686h1v4h-1zM861 686h1v4h-1zM864 686h1v4h-1zM869 686h1v4h-1zM872 686h1v4h-1zM874 686h1v4h-1zM897 686h1v4h-1zM981 686h1v4h-1zM1002 686h1v4h-1zM1028 686h1v4h-1zM1056 686h1v4h-1zM1062 686h1v4h-1z"/>
<path fill="#dac500" d="M105 681h2v5h-2zM165 681h1v5h-1zM167 681h1v5h-1zM193 681h1v5h-1zM227 681h1v5h-1zM304 681h2v5h-2zM309 681h2v5h-2zM343 681h1v5h-1zM409 681h1v5h-1zM440 681h1v5h-1zM446 681h2v5h-2zM486 681h1v5h-1zM516 681h2v5h-2zM521 681h2v5h-2zM526 681h1v5h-1zM594 681h2v5h-2zM615 681h1v5h-1zM686 686h1v4h-1zM693 686h1v4h-1zM708 686h1v4h-1zM748 686h1v4h-1zM774 686h2v4h-2zM779 686h2v4h-2zM797 686h1v4h-1zM805 686h1v4h-1zM826 686h1v4h-1zM862 686h1v4h-1zM863 686h1v4h-1zM873 686h1v4h-1zM878 686h2v4h-2zM888 686h1v4h-1zM935 686h1v4h-1zM961 686h2v4h-2zM1001 686h1v4h-1zM1018 686h2v4h-2zM1032 686h2v4h-2zM1071 686h1v4h-1zM1076 686h1v4h-1z"/>
<path fill="#dbc100" d="M102 681h2v5h-2zM146 681h2v5h-2zM161 681h1v5h-1zM204 681h2v5h-2zM216 681h2v5h-2zM220 681h2v5h-2zM223 681h1v5h-1zM245 681h1v5h-1zM265 681h1v5h-1zM266 681h1v5h-1zM330 681h2v5h-2zM344 681h1v5h-1zM349 681h1v5h-1zM362 681h2v5h-2zM364 681h1v5h-1zM501 681h2v5h-2zM508 681h1v5h-1zM513 681h2v5h-2zM525 681h1v5h-1zM579 681h1v5h-1zM622 681h2v5h-2zM703 686h1v4h-1zM741 686h1v4h-1zM742 686h2v4h-2zM753 686h1v4h-1zM767 686h2v4h-2zM790 686h2v4h-2zM793 686h2v4h-2zM803 686h2v4h-2zM808 686h1v4h-1zM809 686h2v4h-2zM814 686h1v4h-1zM834 686h2v4h-2zM854 686h1v4h-1zM870 686h1v4h-1zM894 686h1v4h-1zM923 686h1v4h-1zM967 686h1v4h-1zM970 686h1v4h-1zM1003 686h1v4h-1zM1017 686h1v4h-1z"/>
<path fill="#ddbe00" d="M122 681h1v5h-1zM130 681h2v5h-2zM136 681h2v5h-2zM163 681h2v5h-2zM226 681h1v5h-1zM237 681h1v5h-1zM241 681h1v5h-1zM271 681h1v5h-1zM296 681h1v5h-1zM373 681h1v5h-1zM393 681h1v5h-1zM464 681h1v5h-1zM477 681h2v5h-2zM552 681h1v5h-1zM585 681h1v5h-1zM687 686h1v4h-1zM702 686h1v4h-1zM717 686h1v4h-1zM734 686h1v4h-1zM747 686h1v4h-1zM796 686h1v4h-1zM811 686h1v4h-1zM837 686h2v4h-2zM844 686h2v4h-2zM853 686h1v4h-1zM876 686h2v4h-2zM918 686h1v4h-1zM937 686h1v4h-1zM958 686h1v4h-1zM971 686h1v4h-1zM1006 686h2v4h-2zM1055 686h1v4h-1zM1063 686h1v4h-1z"/>
<path fill="#dfba00" d="M100 681h2v5h-2zM139 681h2v5h-2zM187 681h1v5h-1zM206 681h1v5h-1zM234 681h2v5h-2zM277 681h1v5h-1zM282 681h2v5h-2zM287 681h2v5h-2zM341 681h1v5h-1zM352 681h2v5h-2zM359 681h1v5h-1zM374 681h1v5h-1zM489 681h1v5h-1zM530 681h1v5h-1zM554 681h1v5h-1zM562 681h2v5h-2zM567 681h2v5h-2zM586 681h1v5h-1zM631 681h2v5h-2zM642 681h1v5h-1zM656 681h2v5h-2zM667 686h1v4h-1zM668 686h1v4h-1zM704 686h1v4h-1zM709 686h1v4h-1zM731 686h1v4h-1zM749 686h1v4h-1zM846 686h1v4h-1zM882 686h2v4h-2zM934 686h1v4h-1zM940 686h1v4h-1zM943 686h1v4h-1zM948 686h2v4h-2zM995 686h1v4h-1zM1020 686h1v4h-1z"/>
<path fill="#e1b700" d="M117 681h1v5h-1zM168 681h1v5h-1zM178 681h1v5h-1zM186 681h1v5h-1zM209 681h2v5h-2zM215 681h1v5h-1zM228 681h1v5h-1zM290 681h1v5h-1zM335 681h1v5h-1zM355 681h1v5h-1zM379 681h2v5h-2zM383 681h2v5h-2zM390 681h1v5h-1zM398 681h2v5h-2zM402 681h1v5h-1zM410 681h1v5h-1zM416 681h1v5h-1zM461 681h1v5h-1zM506 681h2v5h-2zM576 681h1v5h-1zM634 681h2v5h-2zM644 681h1v5h-1zM705 686h1v4h-1zM763 686h2v4h-2zM786 686h2v4h-2zM800 686h1v4h-1zM801 686h2v4h-2zM868 686h1v4h-1zM898 686h1v4h-1zM911 686h2v4h-2zM914 686h1v4h-1zM950 686h2v4h-2zM1024 686h1v4h-1zM1050 686h2v4h-2z"/>
<path fill="#e2b300" d="M107 681h2v5h-2zM132 681h1v5h-1zM138 681h1v5h-1zM184 681h2v5h-2zM212 681h2v5h-2zM232 681h2v5h-2zM247 681h2v5h-2zM254 681h1v5h-1zM314 681h2v5h-2zM318 681h2v5h-2zM339 681h2v5h-2zM366 681h2v5h-2zM442 681h1v5h-1zM459 681h2v5h-2zM497 681h1v5h-1zM531 681h1v5h-1zM532 681h1v5h-1zM547 681h1v5h-1zM620 681h2v5h-2zM633 681h1v5h-1zM715 686h2v4h-2zM733 686h1v4h-1zM795 686h1v4h-1zM871 686h1v4h-1zM875 686h1v4h-1zM921 686h1v4h-1zM924 686h1v4h-1zM1004 686h2v4h-2z"/>
<path fill="#e4b000" d="M169 681h2v5h-2zM267 681h2v5h-2zM284 681h2v5h-2zM286 681h1v5h-1zM321 681h1v5h-1zM322 681h2v5h-2zM325 681h2v5h-2zM404 681h1v5h-1zM429 681h1v5h-1zM435 681h1v5h-1zM469 681h2v5h-2zM479 681h2v5h-2zM481 681h2v5h-2zM560 681h2v5h-2zM593 681h1v5h-1zM645 681h1v5h-1z"/>
<path fill="#e6ac00" d="M291 681h2v5h-2zM327 681h1v5h-1zM365 681h1v5h-1zM391 681h2v5h-2zM406 681h2v5h-2zM451 681h1v5h-1zM475 681h1v5h-1zM509 681h2v5h-2zM569 681h2v5h-2zM616 681h2v5h-2zM640 681h2v5h-2z"/>
<path fill="#ec9a00" d="M138 686h1v4h-1zM178 686h1v4h-1zM186 686h1v4h-1zM223 686h1v4h-1zM245 686h1v4h-1zM328 686h2v4h-2zM341 686h1v4h-1zM390 686h1v4h-1zM451 686h1v4h-1zM516 686h2v4h-2z"/>
<path fill="#ed9800" d="M125 686h2v4h-2zM161 686h1v4h-1zM193 686h1v4h-1zM209 686h2v4h-2zM234 686h2v4h-2zM266 686h1v4h-1zM327 686h1v4h-1zM366 686h2v4h-2zM391 686h2v4h-2zM393 686h1v4h-1zM440 686h1v4h-1zM489 686h1v4h-1zM508 686h1v4h-1zM542 686h1v4h-1zM554 686h1v4h-1zM579 686h1v4h-1zM586 686h1v4h-1zM644 686h1v4h-1z"/>
<path fill="#ed9600" d="M105 686h2v4h-2zM107 686h2v4h-2zM179 686h1v4h-1zM207 686h1v4h-1zM228 686h1v4h-1zM237 686h1v4h-1zM241 686h1v4h-1zM267 686h2v4h-2zM284 686h2v4h-2zM321 686h1v4h-1zM373 686h1v4h-1zM383 686h2v4h-2zM406 686h2v4h-2zM461 686h1v4h-1zM469 686h2v4h-2zM481 686h2v4h-2zM485 686h1v4h-1zM552 686h1v4h-1zM562 686h2v4h-2zM593 686h1v4h-1zM647 686h1v4h-1zM656 686h2v4h-2z"/>
<path fill="#ee9400" d="M100 686h2v4h-2zM258 686h2v4h-2zM265 686h1v4h-1zM304 686h2v4h-2zM309 686h2v4h-2zM355 686h1v4h-1zM416 686h1v4h-1zM429 686h1v4h-1zM442 686h1v4h-1zM487 686h1v4h-1zM513 686h2v4h-2zM532 686h1v4h-1zM569 686h2v4h-2zM594 686h2v4h-2zM598 686h2v4h-2zM620 686h2v4h-2zM622 686h2v4h-2z"/>
<path fill="#ee9200" d="M122 686h1v4h-1zM136 686h2v4h-2zM139 686h2v4h-2zM167 686h1v4h-1zM188 686h1v4h-1zM226 686h1v4h-1zM227 686h1v4h-1zM290 686h1v4h-1zM322 686h2v4h-2zM335 686h1v4h-1zM343 686h1v4h-1zM403 686h1v4h-1zM435 686h1v4h-1zM475 686h1v4h-1zM477 686h2v4h-2zM501 686h2v4h-2zM509 686h2v4h-2zM560 686h2v4h-2zM642 686h1v4h-1z"/>
<path fill="#ef9000" d="M96 686h1v4h-1zM117 686h1v4h-1zM168 686h1v4h-1zM184 686h2v4h-2zM204 686h2v4h-2zM206 686h1v4h-1zM215 686h1v4h-1zM282 686h2v4h-2zM325 686h2v4h-2zM330 686h2v4h-2zM359 686h1v4h-1zM364 686h1v4h-1zM409 686h1v4h-1zM479 686h2v4h-2zM576 686h1v4h-1zM615 686h1v4h-1zM616 686h2v4h-2z"/>
<path fill="#f08e00" d="M102 686h2v4h-2zM130 686h2v4h-2zM187 686h1v4h-1zM212 686h2v4h-2zM254 686h1v4h-1zM277 686h1v4h-1zM301 686h2v4h-2zM318 686h2v4h-2zM352 686h2v4h-2zM365 686h1v4h-1zM374 686h1v4h-1zM388 686h1v4h-1zM459 686h2v4h-2zM521 686h2v4h-2zM525 686h1v4h-1zM547 686h1v4h-1zM633 686h1v4h-1z"/>
<path fill="#f08c00" d="M127 686h1v4h-1zM132 686h1v4h-1zM146 686h2v4h-2zM163 686h2v4h-2zM165 686h1v4h-1zM169 686h2v4h-2zM216 686h2v4h-2zM232 686h2v4h-2zM271 686h1v4h-1zM287 686h2v4h-2zM296 686h1v4h-1zM311 686h1v4h-1zM314 686h2v4h-2zM339 686h2v4h-2zM344 686h1v4h-1zM398 686h2v4h-2zM446 686h2v4h-2zM464 686h1v4h-1zM486 686h1v4h-1zM497 686h1v4h-1zM506 686h2v4h-2zM526 686h1v4h-1zM531 686h1v4h-1zM585 686h1v4h-1zM631 686h2v4h-2zM634 686h2v4h-2zM640 686h2v4h-2zM645 686h1v4h-1z"/>
<path fill="#f18900" d="M220 686h2v4h-2zM247 686h2v4h-2zM286 686h1v4h-1zM291 686h2v4h-2zM349 686h1v4h-1zM362 686h2v4h-2zM379 686h2v4h-2zM402 686h1v4h-1zM404 686h1v4h-1zM410 686h1v4h-1zM530 686h1v4h-1zM567 686h2v4h-2z"/>
<text x="8.88" y="536.8" font-size="12.7" textLength="65.51" lengthAdjust="spacingAndGlyphs" fill="#333" style="white-space:pre">LEMMS Ions</text>
<rect x="87" y="555" width="8" height="1" fill="#333"/>
<rect x="91" y="539" width="4" height="1" fill="#333"/>
<rect x="91" y="530" width="4" height="1" fill="#333"/>
<rect x="91" y="523" width="4" height="1" fill="#333"/>
<rect x="91" y="518" width="4" height="1" fill="#333"/>
<rect x="91" y="514" width="4" height="1" fill="#333"/>
<rect x="87" y="607" width="8" height="1" fill="#333"/>
<rect x="91" y="591" width="4" height="1" fill="#333"/>
<rect x="91" y="582" width="4" height="1" fill="#333"/>
<rect x="91" y="575" width="4" height="1" fill="#333"/>
<rect x="91" y="570" width="4" height="1" fill="#333"/>
<rect x="91" y="566" width="4" height="1" fill="#333"/>
<rect x="91" y="563" width="4" height="1" fill="#333"/>
<rect x="91" y="560" width="4" height="1" fill="#333"/>
<rect x="91" y="557" width="4" height="1" fill="#333"/>
<rect x="87" y="659" width="8" height="1" fill="#333"/>
<rect x="91" y="643" width="4" height="1" fill="#333"/>
<rect x="91" y="634" width="4" height="1" fill="#333"/>
<rect x="91" y="628" width="4" height="1" fill="#333"/>
<rect x="91" y="623" width="4" height="1" fill="#333"/>
<rect x="91" y="618" width="4" height="1" fill="#333"/>
<rect x="91" y="615" width="4" height="1" fill="#333"/>
<rect x="91" y="612" width="4" height="1" fill="#333"/>
<rect x="91" y="609" width="4" height="1" fill="#333"/>
<rect x="91" y="686" width="4" height="1" fill="#333"/>
<rect x="91" y="680" width="4" height="1" fill="#333"/>
<rect x="91" y="675" width="4" height="1" fill="#333"/>
<rect x="91" y="671" width="4" height="1" fill="#333"/>
<rect x="91" y="667" width="4" height="1" fill="#333"/>
<rect x="91" y="664" width="4" height="1" fill="#333"/>
<rect x="91" y="661" width="4" height="1" fill="#333"/>
<text x="59.93" y="562.3" font-size="12.7" textLength="14.83" lengthAdjust="spacingAndGlyphs" fill="#333" style="white-space:pre">10</text>
<text x="74.93" y="556.2" font-size="12.7" textLength="7.42" lengthAdjust="spacingAndGlyphs" fill="#333" style="white-space:pre">4</text>
<text x="59.93" y="614.3" font-size="12.7" textLength="14.83" lengthAdjust="spacingAndGlyphs" fill="#333" style="white-space:pre">10</text>
<text x="75.20" y="608.2" font-size="12.7" textLength="7.42" lengthAdjust="spacingAndGlyphs" fill="#333" style="white-space:pre">3</text>
<text x="59.93" y="666.3" font-size="12.7" textLength="14.83" lengthAdjust="spacingAndGlyphs" fill="#333" style="white-space:pre">10</text>
<text x="75.20" y="660.2" font-size="12.7" textLength="7.42" lengthAdjust="spacingAndGlyphs" fill="#333" style="white-space:pre">2</text>
<text transform="translate(50,638.20) rotate(-90)" x="-1.01" y="0" font-size="12.7" textLength="73.43" lengthAdjust="spacingAndGlyphs" fill="#333" style="white-space:pre">Energy (keV)</text>
<rect x="136" y="688" width="1" height="2" fill="#555"/>
<rect x="177" y="688" width="1" height="2" fill="#555"/>
<rect x="218" y="688" width="1" height="2" fill="#555"/>
<rect x="259" y="688" width="1" height="2" fill="#555"/>
<rect x="300" y="688" width="1" height="2" fill="#555"/>
<rect x="341" y="688" width="1" height="2" fill="#555"/>
<rect x="382" y="688" width="1" height="2" fill="#555"/>
<rect x="423" y="688" width="1" height="2" fill="#555"/>
<rect x="464" y="688" width="1" height="2" fill="#555"/>
<rect x="505" y="688" width="1" height="2" fill="#555"/>
<rect x="546" y="688" width="1" height="2" fill="#555"/>
<rect x="588" y="688" width="1" height="2" fill="#555"/>
<rect x="629" y="688" width="1" height="2" fill="#555"/>
<rect x="670" y="688" width="1" height="2" fill="#555"/>
<rect x="711" y="688" width="1" height="2" fill="#555"/>
<rect x="752" y="688" width="1" height="2" fill="#555"/>
<rect x="793" y="688" width="1" height="2" fill="#555"/>
<rect x="834" y="688" width="1" height="2" fill="#555"/>
<rect x="875" y="688" width="1" height="2" fill="#555"/>
<rect x="916" y="688" width="1" height="2" fill="#555"/>
<rect x="957" y="688" width="1" height="2" fill="#555"/>
<rect x="998" y="688" width="1" height="2" fill="#555"/>
<rect x="1039" y="688" width="1" height="2" fill="#555"/>
<defs><linearGradient id="cb4" x1="0" y1="0" x2="0" y2="1"><stop offset="0.000" stop-color="#d0606a"/><stop offset="0.040" stop-color="#e03a3a"/><stop offset="0.114" stop-color="#f05000"/><stop offset="0.200" stop-color="#f87000"/><stop offset="0.256" stop-color="#f08c00"/><stop offset="0.324" stop-color="#e8a800"/><stop offset="0.370" stop-color="#d8c800"/><stop offset="0.426" stop-color="#d0e000"/><stop offset="0.466" stop-color="#b0f000"/><stop offset="0.483" stop-color="#90e820"/><stop offset="0.540" stop-color="#40d850"/><stop offset="0.597" stop-color="#20c070"/><stop offset="0.653" stop-color="#10a890"/><stop offset="0.710" stop-color="#1098a8"/><stop offset="0.767" stop-color="#1080d0"/><stop offset="0.807" stop-color="#1068f0"/><stop offset="0.852" stop-color="#1830f8"/><stop offset="0.892" stop-color="#1010d0"/><stop offset="0.938" stop-color="#000890"/><stop offset="1.000" stop-color="#000060"/></linearGradient></defs>
<rect x="1092" y="515" width="12" height="176" fill="url(#cb4)"/>
<rect x="1104" y="514" width="1" height="178" fill="#333"/>
<rect x="1104" y="515" width="8" height="1" fill="#333"/>
<rect x="1104" y="535" width="5" height="1" fill="#333"/>
<rect x="1104" y="554" width="8" height="1" fill="#333"/>
<rect x="1104" y="574" width="5" height="1" fill="#333"/>
<rect x="1104" y="594" width="8" height="1" fill="#333"/>
<rect x="1104" y="613" width="5" height="1" fill="#333"/>
<rect x="1104" y="633" width="8" height="1" fill="#333"/>
<rect x="1104" y="653" width="5" height="1" fill="#333"/>
<rect x="1104" y="672" width="8" height="1" fill="#333"/>
<text x="1116.73" y="523.4" font-size="12.7" textLength="14.83" lengthAdjust="spacingAndGlyphs" fill="#333" style="white-space:pre">10</text>
<text x="1132.73" y="517.3" font-size="12.7" textLength="7.42" lengthAdjust="spacingAndGlyphs" fill="#333" style="white-space:pre">4</text>
<text x="1116.73" y="561.4" font-size="12.7" textLength="14.83" lengthAdjust="spacingAndGlyphs" fill="#333" style="white-space:pre">10</text>
<text x="1132.33" y="555.3" font-size="12.7" textLength="7.42" lengthAdjust="spacingAndGlyphs" fill="#333" style="white-space:pre">2</text>
<text x="1116.73" y="600.4" font-size="12.7" textLength="14.83" lengthAdjust="spacingAndGlyphs" fill="#333" style="white-space:pre">10</text>
<text x="1132.47" y="594.3" font-size="12.7" textLength="7.42" lengthAdjust="spacingAndGlyphs" fill="#333" style="white-space:pre">0</text>
<text x="1116.73" y="639.4" font-size="12.7" textLength="14.83" lengthAdjust="spacingAndGlyphs" fill="#333" style="white-space:pre">10</text>
<rect x="1133.00" y="629.30" width="4.8" height="1.15" fill="#333"/>
<text x="1139.33" y="633.3" font-size="12.7" textLength="7.42" lengthAdjust="spacingAndGlyphs" fill="#333" style="white-space:pre">2</text>
<text x="1116.73" y="678.4" font-size="12.7" textLength="14.83" lengthAdjust="spacingAndGlyphs" fill="#333" style="white-space:pre">10</text>
<rect x="1133.00" y="668.30" width="4.8" height="1.15" fill="#333"/>
<text x="1139.73" y="672.3" font-size="12.7" textLength="7.42" lengthAdjust="spacingAndGlyphs" fill="#333" style="white-space:pre">4</text>
<text transform="translate(1156,518.60) rotate(90)" x="-0.94" y="0" font-size="12.7" textLength="167.62" lengthAdjust="spacingAndGlyphs" fill="#333" style="white-space:pre">intensity 1/(s cm^2 ster keV)</text>
<text x="29.20" y="707" font-size="12.7" textLength="50.03" lengthAdjust="spacingAndGlyphs" fill="#333" style="white-space:pre">Sunlight?</text>
<rect x="95" y="695" width="986" height="16" fill="#333"/>
<rect x="97" y="696" width="37" height="14" fill="#00ff00"/>
<rect x="135" y="696" width="521" height="14" fill="#ff0000"/>
<rect x="657" y="696" width="423" height="14" fill="#00ff00"/>
<rect x="136" y="711" width="1" height="4" fill="#333"/>
<rect x="177" y="711" width="1" height="4" fill="#333"/>
<rect x="218" y="711" width="1" height="8" fill="#333"/>
<rect x="259" y="711" width="1" height="4" fill="#333"/>
<rect x="300" y="711" width="1" height="4" fill="#333"/>
<rect x="341" y="711" width="1" height="8" fill="#333"/>
<rect x="382" y="711" width="1" height="4" fill="#333"/>
<rect x="423" y="711" width="1" height="4" fill="#333"/>
<rect x="464" y="711" width="1" height="8" fill="#333"/>
<rect x="505" y="711" width="1" height="4" fill="#333"/>
<rect x="546" y="711" width="1" height="4" fill="#333"/>
<rect x="588" y="711" width="1" height="8" fill="#333"/>
<rect x="629" y="711" width="1" height="4" fill="#333"/>
<rect x="670" y="711" width="1" height="4" fill="#333"/>
<rect x="711" y="711" width="1" height="8" fill="#333"/>
<rect x="752" y="711" width="1" height="4" fill="#333"/>
<rect x="793" y="711" width="1" height="4" fill="#333"/>
<rect x="834" y="711" width="1" height="8" fill="#333"/>
<rect x="875" y="711" width="1" height="4" fill="#333"/>
<rect x="916" y="711" width="1" height="4" fill="#333"/>
<rect x="957" y="711" width="1" height="8" fill="#333"/>
<rect x="998" y="711" width="1" height="4" fill="#333"/>
<rect x="1039" y="711" width="1" height="4" fill="#333"/>
<rect x="1080" y="711" width="1" height="8" fill="#333"/>
<text x="200.23" y="733.75" font-size="12.7" textLength="35.37" lengthAdjust="spacingAndGlyphs" fill="#333" style="white-space:pre">03:00</text>
<text x="208.15" y="748.8" font-size="12.7" textLength="27.51" lengthAdjust="spacingAndGlyphs" fill="#333" style="white-space:pre">0.52</text>
<text x="200.09" y="763.9" font-size="12.7" textLength="35.37" lengthAdjust="spacingAndGlyphs" fill="#333" style="white-space:pre">42.44</text>
<text x="200.23" y="778.9" font-size="12.7" textLength="35.37" lengthAdjust="spacingAndGlyphs" fill="#333" style="white-space:pre">68.63</text>
<text x="323.23" y="733.75" font-size="12.7" textLength="35.37" lengthAdjust="spacingAndGlyphs" fill="#333" style="white-space:pre">06:00</text>
<text x="330.87" y="748.8" font-size="12.7" textLength="27.51" lengthAdjust="spacingAndGlyphs" fill="#333" style="white-space:pre">0.54</text>
<text x="323.38" y="763.9" font-size="12.7" textLength="35.37" lengthAdjust="spacingAndGlyphs" fill="#333" style="white-space:pre">42.61</text>
<text x="323.23" y="778.9" font-size="12.7" textLength="35.37" lengthAdjust="spacingAndGlyphs" fill="#333" style="white-space:pre">70.15</text>
<text x="446.23" y="733.75" font-size="12.7" textLength="35.37" lengthAdjust="spacingAndGlyphs" fill="#333" style="white-space:pre">09:00</text>
<text x="454.15" y="748.8" font-size="12.7" textLength="27.51" lengthAdjust="spacingAndGlyphs" fill="#333" style="white-space:pre">0.57</text>
<text x="446.23" y="763.9" font-size="12.7" textLength="35.37" lengthAdjust="spacingAndGlyphs" fill="#333" style="white-space:pre">42.78</text>
<text x="446.38" y="778.9" font-size="12.7" textLength="35.37" lengthAdjust="spacingAndGlyphs" fill="#333" style="white-space:pre">71.71</text>
<text x="570.23" y="733.75" font-size="12.7" textLength="35.37" lengthAdjust="spacingAndGlyphs" fill="#333" style="white-space:pre">12:00</text>
<text x="578.01" y="748.8" font-size="12.7" textLength="27.51" lengthAdjust="spacingAndGlyphs" fill="#333" style="white-space:pre">0.60</text>
<text x="570.23" y="763.9" font-size="12.7" textLength="35.37" lengthAdjust="spacingAndGlyphs" fill="#333" style="white-space:pre">42.95</text>
<text x="570.38" y="778.9" font-size="12.7" textLength="35.37" lengthAdjust="spacingAndGlyphs" fill="#333" style="white-space:pre">73.31</text>
<text x="693.23" y="733.75" font-size="12.7" textLength="35.37" lengthAdjust="spacingAndGlyphs" fill="#333" style="white-space:pre">15:00</text>
<text x="701.15" y="748.8" font-size="12.7" textLength="27.51" lengthAdjust="spacingAndGlyphs" fill="#333" style="white-space:pre">0.63</text>
<text x="694.37" y="763.9" font-size="12.7" textLength="34.32" lengthAdjust="spacingAndGlyphs" fill="#333" style="white-space:pre">43.11</text>
<text x="693.23" y="778.9" font-size="12.7" textLength="35.37" lengthAdjust="spacingAndGlyphs" fill="#333" style="white-space:pre">74.96</text>
<text x="816.23" y="733.75" font-size="12.7" textLength="35.37" lengthAdjust="spacingAndGlyphs" fill="#333" style="white-space:pre">18:00</text>
<text x="824.15" y="748.8" font-size="12.7" textLength="27.51" lengthAdjust="spacingAndGlyphs" fill="#333" style="white-space:pre">0.66</text>
<text x="816.38" y="763.9" font-size="12.7" textLength="35.37" lengthAdjust="spacingAndGlyphs" fill="#333" style="white-space:pre">43.27</text>
<text x="816.23" y="778.9" font-size="12.7" textLength="35.37" lengthAdjust="spacingAndGlyphs" fill="#333" style="white-space:pre">76.65</text>
<text x="939.23" y="733.75" font-size="12.7" textLength="35.37" lengthAdjust="spacingAndGlyphs" fill="#333" style="white-space:pre">21:00</text>
<text x="947.15" y="748.8" font-size="12.7" textLength="27.51" lengthAdjust="spacingAndGlyphs" fill="#333" style="white-space:pre">0.69</text>
<text x="939.38" y="763.9" font-size="12.7" textLength="35.37" lengthAdjust="spacingAndGlyphs" fill="#333" style="white-space:pre">43.42</text>
<text x="939.23" y="778.9" font-size="12.7" textLength="35.37" lengthAdjust="spacingAndGlyphs" fill="#333" style="white-space:pre">78.39</text>
<text x="1062.23" y="733.75" font-size="12.7" textLength="35.37" lengthAdjust="spacingAndGlyphs" fill="#333" style="white-space:pre">00:00</text>
<text x="1070.15" y="748.8" font-size="12.7" textLength="27.51" lengthAdjust="spacingAndGlyphs" fill="#333" style="white-space:pre">0.73</text>
<text x="1062.38" y="763.9" font-size="12.7" textLength="35.37" lengthAdjust="spacingAndGlyphs" fill="#333" style="white-space:pre">43.57</text>
<text x="1062.23" y="778.9" font-size="12.7" textLength="35.37" lengthAdjust="spacingAndGlyphs" fill="#333" style="white-space:pre">80.18</text>
<text x="1062.17" y="745.9" font-size="12.7" textLength="61.60" lengthAdjust="spacingAndGlyphs" fill="#333" style="white-space:pre">2014-015</text>
<text x="16.03" y="748.75" font-size="12.7" textLength="13.25" lengthAdjust="spacingAndGlyphs" fill="#333" style="white-space:pre">LT</text>
<text x="34.25" y="748.75" font-size="12.7" textLength="25.56" lengthAdjust="spacingAndGlyphs" fill="#333" style="white-space:pre">(hrs)</text>
<text x="46.14" y="763.75" font-size="12.7" textLength="13.21" lengthAdjust="spacingAndGlyphs" fill="#333" style="white-space:pre">Rs</text>
<text x="12.97" y="778.75" font-size="12.7" textLength="36.61" lengthAdjust="spacingAndGlyphs" fill="#333" style="white-space:pre">Dipole</text>
<text x="54.09" y="778.75" font-size="12.7" textLength="6.32" lengthAdjust="spacingAndGlyphs" fill="#333" style="white-space:pre">L</text>
<rect x="215.5" y="802.5" width="151" height="147" fill="none" stroke="#333" stroke-width="1"/>
<rect x="207" y="803" width="8" height="1" fill="#333"/>
<rect x="211" y="805" width="4" height="1" fill="#333"/>
<rect x="211" y="807" width="4" height="1" fill="#333"/>
<rect x="211" y="808" width="4" height="1" fill="#333"/>
<rect x="211" y="810" width="4" height="1" fill="#333"/>
<rect x="211" y="812" width="4" height="1" fill="#333"/>
<rect x="211" y="814" width="4" height="1" fill="#333"/>
<rect x="211" y="816" width="4" height="1" fill="#333"/>
<rect x="211" y="818" width="4" height="1" fill="#333"/>
<rect x="211" y="819" width="4" height="1" fill="#333"/>
<rect x="207" y="821" width="8" height="1" fill="#333"/>
<rect x="211" y="823" width="4" height="1" fill="#333"/>
<rect x="211" y="825" width="4" height="1" fill="#333"/>
<rect x="211" y="827" width="4" height="1" fill="#333"/>
<rect x="211" y="829" width="4" height="1" fill="#333"/>
<rect x="211" y="830" width="4" height="1" fill="#333"/>
<rect x="211" y="832" width="4" height="1" fill="#333"/>
<rect x="211" y="834" width="4" height="1" fill="#333"/>
<rect x="211" y="836" width="4" height="1" fill="#333"/>
<rect x="211" y="838" width="4" height="1" fill="#333"/>
<rect x="207" y="840" width="8" height="1" fill="#333"/>
<rect x="211" y="841" width="4" height="1" fill="#333"/>
<rect x="211" y="843" width="4" height="1" fill="#333"/>
<rect x="211" y="845" width="4" height="1" fill="#333"/>
<rect x="211" y="847" width="4" height="1" fill="#333"/>
<rect x="211" y="849" width="4" height="1" fill="#333"/>
<rect x="211" y="851" width="4" height="1" fill="#333"/>
<rect x="211" y="852" width="4" height="1" fill="#333"/>
<rect x="211" y="854" width="4" height="1" fill="#333"/>
<rect x="211" y="856" width="4" height="1" fill="#333"/>
<rect x="207" y="858" width="8" height="1" fill="#333"/>
<rect x="211" y="860" width="4" height="1" fill="#333"/>
<rect x="211" y="862" width="4" height="1" fill="#333"/>
<rect x="211" y="863" width="4" height="1" fill="#333"/>
<rect x="211" y="865" width="4" height="1" fill="#333"/>
<rect x="211" y="867" width="4" height="1" fill="#333"/>
<rect x="211" y="869" width="4" height="1" fill="#333"/>
<rect x="211" y="871" width="4" height="1" fill="#333"/>
<rect x="211" y="873" width="4" height="1" fill="#333"/>
<rect x="211" y="874" width="4" height="1" fill="#333"/>
<rect x="207" y="876" width="8" height="1" fill="#333"/>
<rect x="211" y="878" width="4" height="1" fill="#333"/>
<rect x="211" y="880" width="4" height="1" fill="#333"/>
<rect x="211" y="882" width="4" height="1" fill="#333"/>
<rect x="211" y="884" width="4" height="1" fill="#333"/>
<rect x="211" y="885" width="4" height="1" fill="#333"/>
<rect x="211" y="887" width="4" height="1" fill="#333"/>
<rect x="211" y="889" width="4" height="1" fill="#333"/>
<rect x="211" y="891" width="4" height="1" fill="#333"/>
<rect x="211" y="893" width="4" height="1" fill="#333"/>
<rect x="207" y="895" width="8" height="1" fill="#333"/>
<rect x="211" y="896" width="4" height="1" fill="#333"/>
<rect x="211" y="898" width="4" height="1" fill="#333"/>
<rect x="211" y="900" width="4" height="1" fill="#333"/>
<rect x="211" y="902" width="4" height="1" fill="#333"/>
<rect x="211" y="904" width="4" height="1" fill="#333"/>
<rect x="211" y="906" width="4" height="1" fill="#333"/>
<rect x="211" y="907" width="4" height="1" fill="#333"/>
<rect x="211" y="909" width="4" height="1" fill="#333"/>
<rect x="211" y="911" width="4" height="1" fill="#333"/>
<rect x="207" y="913" width="8" height="1" fill="#333"/>
<rect x="211" y="915" width="4" height="1" fill="#333"/>
<rect x="211" y="917" width="4" height="1" fill="#333"/>
<rect x="211" y="918" width="4" height="1" fill="#333"/>
<rect x="211" y="920" width="4" height="1" fill="#333"/>
<rect x="211" y="922" width="4" height="1" fill="#333"/>
<rect x="211" y="924" width="4" height="1" fill="#333"/>
<rect x="211" y="926" width="4" height="1" fill="#333"/>
<rect x="211" y="928" width="4" height="1" fill="#333"/>
<rect x="211" y="929" width="4" height="1" fill="#333"/>
<rect x="207" y="931" width="8" height="1" fill="#333"/>
<rect x="211" y="933" width="4" height="1" fill="#333"/>
<rect x="211" y="935" width="4" height="1" fill="#333"/>
<rect x="211" y="937" width="4" height="1" fill="#333"/>
<rect x="211" y="939" width="4" height="1" fill="#333"/>
<rect x="211" y="940" width="4" height="1" fill="#333"/>
<rect x="211" y="942" width="4" height="1" fill="#333"/>
<rect x="211" y="944" width="4" height="1" fill="#333"/>
<rect x="211" y="946" width="4" height="1" fill="#333"/>
<rect x="211" y="948" width="4" height="1" fill="#333"/>
<rect x="207" y="950" width="8" height="1" fill="#333"/>
<rect x="215" y="950" width="1" height="8" fill="#333"/>
<rect x="234" y="950" width="1" height="4" fill="#333"/>
<rect x="253" y="950" width="1" height="8" fill="#333"/>
<rect x="272" y="950" width="1" height="4" fill="#333"/>
<rect x="291" y="950" width="1" height="8" fill="#333"/>
<rect x="309" y="950" width="1" height="4" fill="#333"/>
<rect x="328" y="950" width="1" height="8" fill="#333"/>
<rect x="347" y="950" width="1" height="4" fill="#333"/>
<rect x="366" y="950" width="1" height="8" fill="#333"/>
<text x="176.34" y="807.9" font-size="12.7" textLength="26.39" lengthAdjust="spacingAndGlyphs" fill="#333" style="white-space:pre">-40.</text>
<text x="176.34" y="825.9" font-size="12.7" textLength="26.39" lengthAdjust="spacingAndGlyphs" fill="#333" style="white-space:pre">-30.</text>
<text x="176.34" y="844.4" font-size="12.7" textLength="26.39" lengthAdjust="spacingAndGlyphs" fill="#333" style="white-space:pre">-20.</text>
<text x="176.34" y="862.9" font-size="12.7" textLength="26.39" lengthAdjust="spacingAndGlyphs" fill="#333" style="white-space:pre">-10.</text>
<text x="189.97" y="881.4" font-size="12.7" textLength="12.77" lengthAdjust="spacingAndGlyphs" fill="#333" style="white-space:pre">0.</text>
<text x="181.39" y="899.4" font-size="12.7" textLength="21.29" lengthAdjust="spacingAndGlyphs" fill="#333" style="white-space:pre">10.</text>
<text x="181.39" y="917.9" font-size="12.7" textLength="21.29" lengthAdjust="spacingAndGlyphs" fill="#333" style="white-space:pre">20.</text>
<text x="181.39" y="936.4" font-size="12.7" textLength="21.29" lengthAdjust="spacingAndGlyphs" fill="#333" style="white-space:pre">30.</text>
<text x="181.39" y="954.4" font-size="12.7" textLength="21.29" lengthAdjust="spacingAndGlyphs" fill="#333" style="white-space:pre">40.</text>
<text x="205.99" y="973.8" font-size="12.7" textLength="21.29" lengthAdjust="spacingAndGlyphs" fill="#333" style="white-space:pre">40.</text>
<text x="243.49" y="973.8" font-size="12.7" textLength="21.29" lengthAdjust="spacingAndGlyphs" fill="#333" style="white-space:pre">20.</text>
<text x="285.58" y="973.8" font-size="12.7" textLength="12.77" lengthAdjust="spacingAndGlyphs" fill="#333" style="white-space:pre">0.</text>
<text x="316.49" y="973.8" font-size="12.7" textLength="26.39" lengthAdjust="spacingAndGlyphs" fill="#333" style="white-space:pre">-20.</text>
<text x="354.21" y="973.8" font-size="12.7" textLength="26.39" lengthAdjust="spacingAndGlyphs" fill="#333" style="white-space:pre">-40.</text>
<text x="270.52" y="991.8" font-size="12.7" textLength="38.81" lengthAdjust="spacingAndGlyphs" fill="#333" style="white-space:pre">KSM-X</text>
<text transform="translate(167,895.00) rotate(-90)" x="-0.96" y="0" font-size="12.7" textLength="38.09" lengthAdjust="spacingAndGlyphs" fill="#333" style="white-space:pre">KSM-Y</text>
<path d="M248.40 802.80 C246.80 806.27 241.73 817.47 238.80 823.60 C235.87 829.73 232.93 833.72 230.80 839.60 C228.67 845.48 226.93 852.50 226.00 858.90 C225.07 865.30 225.07 871.07 225.20 878.00 C225.33 884.93 225.33 892.48 226.80 900.50 C228.27 908.52 230.40 917.97 234.00 926.10 C237.60 934.23 246.00 945.43 248.40 949.30" fill="none" stroke="#0000ff" stroke-width="1.1" stroke-dasharray="2.5 1.2"/>
<path d="M283.70 802.80 C281.57 804.67 275.45 809.47 270.90 814.00 C266.35 818.53 260.42 824.13 256.40 830.00 C252.38 835.87 249.07 842.53 246.80 849.20 C244.53 855.87 243.33 863.58 242.80 870.00 C242.27 876.42 242.40 880.48 243.60 887.70 C244.80 894.92 246.78 905.83 250.00 913.30 C253.22 920.77 257.42 926.50 262.90 932.50 C268.38 938.50 279.57 946.50 282.90 949.30" fill="none" stroke="#7a3a10" stroke-width="1.1" stroke-dasharray="2.5 1.2"/>
<path d="M542.40 802.80 C540.80 806.27 535.73 817.47 532.80 823.60 C529.87 829.73 526.93 833.72 524.80 839.60 C522.67 845.48 520.93 852.50 520.00 858.90 C519.07 865.30 519.07 871.07 519.20 878.00 C519.33 884.93 519.33 892.48 520.80 900.50 C522.27 908.52 524.40 917.97 528.00 926.10 C531.60 934.23 540.00 945.43 542.40 949.30" fill="none" stroke="#0000ff" stroke-width="1.1" stroke-dasharray="2.5 1.2"/>
<path d="M577.70 802.80 C575.57 804.67 569.45 809.47 564.90 814.00 C560.35 818.53 554.42 824.13 550.40 830.00 C546.38 835.87 543.07 842.53 540.80 849.20 C538.53 855.87 537.33 863.58 536.80 870.00 C536.27 876.42 536.40 880.48 537.60 887.70 C538.80 894.92 540.78 905.83 544.00 913.30 C547.22 920.77 551.42 926.50 556.90 932.50 C562.38 938.50 573.57 946.50 576.90 949.30" fill="none" stroke="#7a3a10" stroke-width="1.1" stroke-dasharray="2.5 1.2"/>
<ellipse cx="292" cy="877.8" rx="35.6" ry="37.6" fill="none" stroke="#000" stroke-width="1.3"/>
<ellipse cx="292" cy="876.8" rx="2.2" ry="1.5" fill="none" stroke="#000" stroke-width="1.1"/>
<path d="M329.20 834.50 C330.67 835.35 334.92 837.42 338.00 839.60 C341.08 841.78 345.03 844.65 347.70 847.60 C350.37 850.55 352.53 854.08 354.00 857.30 C355.47 860.52 356.22 863.97 356.50 866.90 C356.78 869.83 356.17 872.77 355.70 874.90 C355.23 877.03 354.03 878.90 353.70 879.70" fill="none" stroke="#000" stroke-width="1.2"/>
<path d="M349 849.5 L352.5 854" stroke="#0000ff" stroke-width="5" stroke-linecap="round"/>
<path d="M348.7 850.6999999999999L357.90000000000003 859.9M348.7 859.9L357.90000000000003 850.6999999999999" stroke="#ff2020" stroke-width="1.2"/>
<circle cx="282.9" cy="842" r="2.6" fill="#ff0000"/>
<rect x="509.5" y="802.5" width="151" height="147" fill="none" stroke="#333" stroke-width="1"/>
<rect x="501" y="803" width="8" height="1" fill="#333"/>
<rect x="505" y="805" width="4" height="1" fill="#333"/>
<rect x="505" y="807" width="4" height="1" fill="#333"/>
<rect x="505" y="808" width="4" height="1" fill="#333"/>
<rect x="505" y="810" width="4" height="1" fill="#333"/>
<rect x="505" y="812" width="4" height="1" fill="#333"/>
<rect x="505" y="814" width="4" height="1" fill="#333"/>
<rect x="505" y="816" width="4" height="1" fill="#333"/>
<rect x="505" y="818" width="4" height="1" fill="#333"/>
<rect x="505" y="819" width="4" height="1" fill="#333"/>
<rect x="501" y="821" width="8" height="1" fill="#333"/>
<rect x="505" y="823" width="4" height="1" fill="#333"/>
<rect x="505" y="825" width="4" height="1" fill="#333"/>
<rect x="505" y="827" width="4" height="1" fill="#333"/>
<rect x="505" y="829" width="4" height="1" fill="#333"/>
<rect x="505" y="830" width="4" height="1" fill="#333"/>
<rect x="505" y="832" width="4" height="1" fill="#333"/>
<rect x="505" y="834" width="4" height="1" fill="#333"/>
<rect x="505" y="836" width="4" height="1" fill="#333"/>
<rect x="505" y="838" width="4" height="1" fill="#333"/>
<rect x="501" y="840" width="8" height="1" fill="#333"/>
<rect x="505" y="841" width="4" height="1" fill="#333"/>
<rect x="505" y="843" width="4" height="1" fill="#333"/>
<rect x="505" y="845" width="4" height="1" fill="#333"/>
<rect x="505" y="847" width="4" height="1" fill="#333"/>
<rect x="505" y="849" width="4" height="1" fill="#333"/>
<rect x="505" y="851" width="4" height="1" fill="#333"/>
<rect x="505" y="852" width="4" height="1" fill="#333"/>
<rect x="505" y="854" width="4" height="1" fill="#333"/>
<rect x="505" y="856" width="4" height="1" fill="#333"/>
<rect x="501" y="858" width="8" height="1" fill="#333"/>
<rect x="505" y="860" width="4" height="1" fill="#333"/>
<rect x="505" y="862" width="4" height="1" fill="#333"/>
<rect x="505" y="863" width="4" height="1" fill="#333"/>
<rect x="505" y="865" width="4" height="1" fill="#333"/>
<rect x="505" y="867" width="4" height="1" fill="#333"/>
<rect x="505" y="869" width="4" height="1" fill="#333"/>
<rect x="505" y="871" width="4" height="1" fill="#333"/>
<rect x="505" y="873" width="4" height="1" fill="#333"/>
<rect x="505" y="874" width="4" height="1" fill="#333"/>
<rect x="501" y="876" width="8" height="1" fill="#333"/>
<rect x="505" y="878" width="4" height="1" fill="#333"/>
<rect x="505" y="880" width="4" height="1" fill="#333"/>
<rect x="505" y="882" width="4" height="1" fill="#333"/>
<rect x="505" y="884" width="4" height="1" fill="#333"/>
<rect x="505" y="885" width="4" height="1" fill="#333"/>
<rect x="505" y="887" width="4" height="1" fill="#333"/>
<rect x="505" y="889" width="4" height="1" fill="#333"/>
<rect x="505" y="891" width="4" height="1" fill="#333"/>
<rect x="505" y="893" width="4" height="1" fill="#333"/>
<rect x="501" y="895" width="8" height="1" fill="#333"/>
<rect x="505" y="896" width="4" height="1" fill="#333"/>
<rect x="505" y="898" width="4" height="1" fill="#333"/>
<rect x="505" y="900" width="4" height="1" fill="#333"/>
<rect x="505" y="902" width="4" height="1" fill="#333"/>
<rect x="505" y="904" width="4" height="1" fill="#333"/>
<rect x="505" y="906" width="4" height="1" fill="#333"/>
<rect x="505" y="907" width="4" height="1" fill="#333"/>
<rect x="505" y="909" width="4" height="1" fill="#333"/>
<rect x="505" y="911" width="4" height="1" fill="#333"/>
<rect x="501" y="913" width="8" height="1" fill="#333"/>
<rect x="505" y="915" width="4" height="1" fill="#333"/>
<rect x="505" y="917" width="4" height="1" fill="#333"/>
<rect x="505" y="918" width="4" height="1" fill="#333"/>
<rect x="505" y="920" width="4" height="1" fill="#333"/>
<rect x="505" y="922" width="4" height="1" fill="#333"/>
<rect x="505" y="924" width="4" height="1" fill="#333"/>
<rect x="505" y="926" width="4" height="1" fill="#333"/>
<rect x="505" y="928" width="4" height="1" fill="#333"/>
<rect x="505" y="929" width="4" height="1" fill="#333"/>
<rect x="501" y="931" width="8" height="1" fill="#333"/>
<rect x="505" y="933" width="4" height="1" fill="#333"/>
<rect x="505" y="935" width="4" height="1" fill="#333"/>
<rect x="505" y="937" width="4" height="1" fill="#333"/>
<rect x="505" y="939" width="4" height="1" fill="#333"/>
<rect x="505" y="940" width="4" height="1" fill="#333"/>
<rect x="505" y="942" width="4" height="1" fill="#333"/>
<rect x="505" y="944" width="4" height="1" fill="#333"/>
<rect x="505" y="946" width="4" height="1" fill="#333"/>
<rect x="505" y="948" width="4" height="1" fill="#333"/>
<rect x="501" y="950" width="8" height="1" fill="#333"/>
<rect x="509" y="950" width="1" height="8" fill="#333"/>
<rect x="528" y="950" width="1" height="4" fill="#333"/>
<rect x="547" y="950" width="1" height="8" fill="#333"/>
<rect x="566" y="950" width="1" height="4" fill="#333"/>
<rect x="585" y="950" width="1" height="8" fill="#333"/>
<rect x="603" y="950" width="1" height="4" fill="#333"/>
<rect x="622" y="950" width="1" height="8" fill="#333"/>
<rect x="641" y="950" width="1" height="4" fill="#333"/>
<rect x="660" y="950" width="1" height="8" fill="#333"/>
<text x="475.39" y="807.9" font-size="12.7" textLength="21.29" lengthAdjust="spacingAndGlyphs" fill="#333" style="white-space:pre">40.</text>
<text x="475.39" y="825.9" font-size="12.7" textLength="21.29" lengthAdjust="spacingAndGlyphs" fill="#333" style="white-space:pre">30.</text>
<text x="475.39" y="844.4" font-size="12.7" textLength="21.29" lengthAdjust="spacingAndGlyphs" fill="#333" style="white-space:pre">20.</text>
<text x="475.39" y="862.9" font-size="12.7" textLength="21.29" lengthAdjust="spacingAndGlyphs" fill="#333" style="white-space:pre">10.</text>
<text x="483.97" y="881.4" font-size="12.7" textLength="12.77" lengthAdjust="spacingAndGlyphs" fill="#333" style="white-space:pre">0.</text>
<text x="470.34" y="899.4" font-size="12.7" textLength="26.39" lengthAdjust="spacingAndGlyphs" fill="#333" style="white-space:pre">-10.</text>
<text x="470.34" y="917.9" font-size="12.7" textLength="26.39" lengthAdjust="spacingAndGlyphs" fill="#333" style="white-space:pre">-20.</text>
<text x="470.34" y="936.4" font-size="12.7" textLength="26.39" lengthAdjust="spacingAndGlyphs" fill="#333" style="white-space:pre">-30.</text>
<text x="470.34" y="954.4" font-size="12.7" textLength="26.39" lengthAdjust="spacingAndGlyphs" fill="#333" style="white-space:pre">-40.</text>
<text x="499.99" y="973.8" font-size="12.7" textLength="21.29" lengthAdjust="spacingAndGlyphs" fill="#333" style="white-space:pre">40.</text>
<text x="537.49" y="973.8" font-size="12.7" textLength="21.29" lengthAdjust="spacingAndGlyphs" fill="#333" style="white-space:pre">20.</text>
<text x="579.58" y="973.8" font-size="12.7" textLength="12.77" lengthAdjust="spacingAndGlyphs" fill="#333" style="white-space:pre">0.</text>
<text x="610.49" y="973.8" font-size="12.7" textLength="26.39" lengthAdjust="spacingAndGlyphs" fill="#333" style="white-space:pre">-20.</text>
<text x="648.21" y="973.8" font-size="12.7" textLength="26.39" lengthAdjust="spacingAndGlyphs" fill="#333" style="white-space:pre">-40.</text>
<text x="564.52" y="991.8" font-size="12.7" textLength="38.81" lengthAdjust="spacingAndGlyphs" fill="#333" style="white-space:pre">KSM-X</text>
<text transform="translate(461,895.00) rotate(-90)" x="-0.98" y="0" font-size="12.7" textLength="38.16" lengthAdjust="spacingAndGlyphs" fill="#333" style="white-space:pre">KSM-Z</text>
<path d="M550.3 890 L621.8 863.3" stroke="#000" stroke-width="2"/>
<ellipse cx="585" cy="876.7" rx="2.3" ry="1.2" fill="none" stroke="#000" stroke-width="1" transform="rotate(-20 585 876.7)"/>
<path d="M623.40 813.50 C624.83 814.22 628.80 815.58 632.00 817.80 C635.20 820.02 640.02 824.27 642.60 826.80 C645.18 829.33 646.17 830.60 647.50 833.00 C648.83 835.40 650.02 838.70 650.60 841.20 C651.18 843.70 651.00 845.87 651.00 848.00 C651.00 850.13 651.12 851.40 650.60 854.00 C650.08 856.60 648.35 862.00 647.90 863.60" fill="none" stroke="#000" stroke-width="1.2"/>
<path d="M643.5 827.5 L646.5 831.5" stroke="#0000ff" stroke-width="5" stroke-linecap="round"/>
<path d="M642.8 828.6L652.0 837.8000000000001M642.8 837.8000000000001L652.0 828.6" stroke="#ff2020" stroke-width="1.2"/>
<circle cx="576.5" cy="880.4" r="2.6" fill="#ff0000"/>
<rect x="803.5" y="802.5" width="151" height="147" fill="none" stroke="#333" stroke-width="1"/>
<rect x="795" y="803" width="8" height="1" fill="#333"/>
<rect x="799" y="805" width="4" height="1" fill="#333"/>
<rect x="799" y="807" width="4" height="1" fill="#333"/>
<rect x="799" y="808" width="4" height="1" fill="#333"/>
<rect x="799" y="810" width="4" height="1" fill="#333"/>
<rect x="799" y="812" width="4" height="1" fill="#333"/>
<rect x="799" y="814" width="4" height="1" fill="#333"/>
<rect x="799" y="816" width="4" height="1" fill="#333"/>
<rect x="799" y="818" width="4" height="1" fill="#333"/>
<rect x="799" y="819" width="4" height="1" fill="#333"/>
<rect x="795" y="821" width="8" height="1" fill="#333"/>
<rect x="799" y="823" width="4" height="1" fill="#333"/>
<rect x="799" y="825" width="4" height="1" fill="#333"/>
<rect x="799" y="827" width="4" height="1" fill="#333"/>
<rect x="799" y="829" width="4" height="1" fill="#333"/>
<rect x="799" y="830" width="4" height="1" fill="#333"/>
<rect x="799" y="832" width="4" height="1" fill="#333"/>
<rect x="799" y="834" width="4" height="1" fill="#333"/>
<rect x="799" y="836" width="4" height="1" fill="#333"/>
<rect x="799" y="838" width="4" height="1" fill="#333"/>
<rect x="795" y="840" width="8" height="1" fill="#333"/>
<rect x="799" y="841" width="4" height="1" fill="#333"/>
<rect x="799" y="843" width="4" height="1" fill="#333"/>
<rect x="799" y="845" width="4" height="1" fill="#333"/>
<rect x="799" y="847" width="4" height="1" fill="#333"/>
<rect x="799" y="849" width="4" height="1" fill="#333"/>
<rect x="799" y="851" width="4" height="1" fill="#333"/>
<rect x="799" y="852" width="4" height="1" fill="#333"/>
<rect x="799" y="854" width="4" height="1" fill="#333"/>
<rect x="799" y="856" width="4" height="1" fill="#333"/>
<rect x="795" y="858" width="8" height="1" fill="#333"/>
<rect x="799" y="860" width="4" height="1" fill="#333"/>
<rect x="799" y="862" width="4" height="1" fill="#333"/>
<rect x="799" y="863" width="4" height="1" fill="#333"/>
<rect x="799" y="865" width="4" height="1" fill="#333"/>
<rect x="799" y="867" width="4" height="1" fill="#333"/>
<rect x="799" y="869" width="4" height="1" fill="#333"/>
<rect x="799" y="871" width="4" height="1" fill="#333"/>
<rect x="799" y="873" width="4" height="1" fill="#333"/>
<rect x="799" y="874" width="4" height="1" fill="#333"/>
<rect x="795" y="876" width="8" height="1" fill="#333"/>
<rect x="799" y="878" width="4" height="1" fill="#333"/>
<rect x="799" y="880" width="4" height="1" fill="#333"/>
<rect x="799" y="882" width="4" height="1" fill="#333"/>
<rect x="799" y="884" width="4" height="1" fill="#333"/>
<rect x="799" y="885" width="4" height="1" fill="#333"/>
<rect x="799" y="887" width="4" height="1" fill="#333"/>
<rect x="799" y="889" width="4" height="1" fill="#333"/>
<rect x="799" y="891" width="4" height="1" fill="#333"/>
<rect x="799" y="893" width="4" height="1" fill="#333"/>
<rect x="795" y="895" width="8" height="1" fill="#333"/>
<rect x="799" y="896" width="4" height="1" fill="#333"/>
<rect x="799" y="898" width="4" height="1" fill="#333"/>
<rect x="799" y="900" width="4" height="1" fill="#333"/>
<rect x="799" y="902" width="4" height="1" fill="#333"/>
<rect x="799" y="904" width="4" height="1" fill="#333"/>
<rect x="799" y="906" width="4" height="1" fill="#333"/>
<rect x="799" y="907" width="4" height="1" fill="#333"/>
<rect x="799" y="909" width="4" height="1" fill="#333"/>
<rect x="799" y="911" width="4" height="1" fill="#333"/>
<rect x="795" y="913" width="8" height="1" fill="#333"/>
<rect x="799" y="915" width="4" height="1" fill="#333"/>
<rect x="799" y="917" width="4" height="1" fill="#333"/>
<rect x="799" y="918" width="4" height="1" fill="#333"/>
<rect x="799" y="920" width="4" height="1" fill="#333"/>
<rect x="799" y="922" width="4" height="1" fill="#333"/>
<rect x="799" y="924" width="4" height="1" fill="#333"/>
<rect x="799" y="926" width="4" height="1" fill="#333"/>
<rect x="799" y="928" width="4" height="1" fill="#333"/>
<rect x="799" y="929" width="4" height="1" fill="#333"/>
<rect x="795" y="931" width="8" height="1" fill="#333"/>
<rect x="799" y="933" width="4" height="1" fill="#333"/>
<rect x="799" y="935" width="4" height="1" fill="#333"/>
<rect x="799" y="937" width="4" height="1" fill="#333"/>
<rect x="799" y="939" width="4" height="1" fill="#333"/>
<rect x="799" y="940" width="4" height="1" fill="#333"/>
<rect x="799" y="942" width="4" height="1" fill="#333"/>
<rect x="799" y="944" width="4" height="1" fill="#333"/>
<rect x="799" y="946" width="4" height="1" fill="#333"/>
<rect x="799" y="948" width="4" height="1" fill="#333"/>
<rect x="795" y="950" width="8" height="1" fill="#333"/>
<rect x="803" y="950" width="1" height="8" fill="#333"/>
<rect x="822" y="950" width="1" height="4" fill="#333"/>
<rect x="841" y="950" width="1" height="8" fill="#333"/>
<rect x="860" y="950" width="1" height="4" fill="#333"/>
<rect x="879" y="950" width="1" height="8" fill="#333"/>
<rect x="897" y="950" width="1" height="4" fill="#333"/>
<rect x="916" y="950" width="1" height="8" fill="#333"/>
<rect x="935" y="950" width="1" height="4" fill="#333"/>
<rect x="954" y="950" width="1" height="8" fill="#333"/>
<text x="769.39" y="807.9" font-size="12.7" textLength="21.29" lengthAdjust="spacingAndGlyphs" fill="#333" style="white-space:pre">40.</text>
<text x="769.39" y="825.9" font-size="12.7" textLength="21.29" lengthAdjust="spacingAndGlyphs" fill="#333" style="white-space:pre">30.</text>
<text x="769.39" y="844.4" font-size="12.7" textLength="21.29" lengthAdjust="spacingAndGlyphs" fill="#333" style="white-space:pre">20.</text>
<text x="769.39" y="862.9" font-size="12.7" textLength="21.29" lengthAdjust="spacingAndGlyphs" fill="#333" style="white-space:pre">10.</text>
<text x="777.97" y="881.4" font-size="12.7" textLength="12.77" lengthAdjust="spacingAndGlyphs" fill="#333" style="white-space:pre">0.</text>
<text x="764.34" y="899.4" font-size="12.7" textLength="26.39" lengthAdjust="spacingAndGlyphs" fill="#333" style="white-space:pre">-10.</text>
<text x="764.34" y="917.9" font-size="12.7" textLength="26.39" lengthAdjust="spacingAndGlyphs" fill="#333" style="white-space:pre">-20.</text>
<text x="764.34" y="936.4" font-size="12.7" textLength="26.39" lengthAdjust="spacingAndGlyphs" fill="#333" style="white-space:pre">-30.</text>
<text x="764.34" y="954.4" font-size="12.7" textLength="26.39" lengthAdjust="spacingAndGlyphs" fill="#333" style="white-space:pre">-40.</text>
<text x="791.31" y="973.8" font-size="12.7" textLength="26.39" lengthAdjust="spacingAndGlyphs" fill="#333" style="white-space:pre">-40.</text>
<text x="829.04" y="973.8" font-size="12.7" textLength="26.39" lengthAdjust="spacingAndGlyphs" fill="#333" style="white-space:pre">-20.</text>
<text x="873.58" y="973.8" font-size="12.7" textLength="12.77" lengthAdjust="spacingAndGlyphs" fill="#333" style="white-space:pre">0.</text>
<text x="906.94" y="973.8" font-size="12.7" textLength="21.29" lengthAdjust="spacingAndGlyphs" fill="#333" style="white-space:pre">20.</text>
<text x="944.89" y="973.8" font-size="12.7" textLength="21.29" lengthAdjust="spacingAndGlyphs" fill="#333" style="white-space:pre">40.</text>
<text x="858.52" y="991.8" font-size="12.7" textLength="38.81" lengthAdjust="spacingAndGlyphs" fill="#333" style="white-space:pre">KSM-Y</text>
<text transform="translate(755,895.00) rotate(-90)" x="-0.98" y="0" font-size="12.7" textLength="38.16" lengthAdjust="spacingAndGlyphs" fill="#333" style="white-space:pre">KSM-Z</text>
<ellipse cx="880.2" cy="876.8" rx="38.2" ry="13.2" fill="none" stroke="#000" stroke-width="1.3"/>
<ellipse cx="879.4" cy="876.7" rx="2.2" ry="1.5" fill="none" stroke="#000" stroke-width="1.1"/>
<path d="M836.50 814.00 C839.08 816.37 846.92 823.20 852.00 828.20 C857.08 833.20 862.07 838.23 867.00 844.00 C871.93 849.77 879.17 859.67 881.60 862.80" fill="none" stroke="#000" stroke-width="1.2"/>
<path d="M852 828.5 L857.5 834" stroke="#0000ff" stroke-width="5" stroke-linecap="round"/>
<path d="M852.5 828.3L861.7 837.5M852.5 837.5L861.7 828.3" stroke="#ff2020" stroke-width="1.2"/>
<circle cx="843.5" cy="880.4" r="2.6" fill="#ff0000"/>
</svg></body></html>
